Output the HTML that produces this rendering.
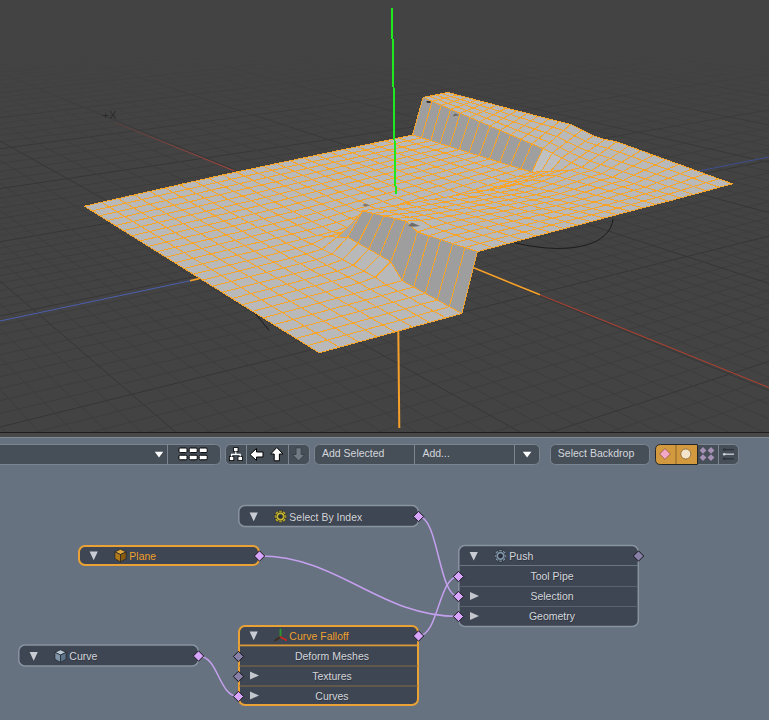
<!DOCTYPE html>
<html><head><meta charset="utf-8">
<style>
html,body{margin:0;padding:0;background:#66727f;}
body{width:769px;height:720px;overflow:hidden;position:relative;font-family:"Liberation Sans",sans-serif;}
#vp{position:absolute;left:0;top:0;width:769px;height:432px;background:#434343;overflow:hidden;}
#vp svg{position:absolute;left:0;top:0;}
</style></head><body>
<div id="vp">
<svg width="769" height="432" viewBox="0 0 769 432" shape-rendering="auto">
<defs><linearGradient id="g1" x1="0" y1="0" x2="0" y2="1"><stop offset="0.12" stop-color="#000"/><stop offset="0.38" stop-color="#fff"/></linearGradient><linearGradient id="g2" x1="0" y1="0" x2="0" y2="1"><stop offset="0.38" stop-color="#000"/><stop offset="0.62" stop-color="#fff"/></linearGradient><mask id="mk1" maskUnits="userSpaceOnUse" x="0" y="0" width="769" height="432"><rect x="0" y="0" width="769" height="432" fill="url(#g1)"/></mask><mask id="mk2" maskUnits="userSpaceOnUse" x="0" y="0" width="769" height="432"><rect x="0" y="0" width="769" height="432" fill="url(#g2)"/></mask></defs>
<g stroke-width="1" opacity="0.8"><g mask="url(#mk1)"><line x1="-5" y1="-13.3" x2="775" y2="-64.3" stroke="#333333"/>
<line x1="-5" y1="-12.1" x2="775" y2="-63.4" stroke="#3c3c3c"/>
<line x1="-5" y1="-10.8" x2="775" y2="-62.6" stroke="#3c3c3c"/>
<line x1="-5" y1="-9.5" x2="775" y2="-61.7" stroke="#3c3c3c"/>
<line x1="-5" y1="-8.1" x2="775" y2="-60.8" stroke="#3c3c3c"/>
<line x1="-5" y1="-6.7" x2="775" y2="-59.8" stroke="#333333"/>
<line x1="-5" y1="-5.3" x2="775" y2="-58.9" stroke="#3c3c3c"/>
<line x1="-5" y1="-3.9" x2="775" y2="-57.9" stroke="#3c3c3c"/>
<line x1="-5" y1="-2.4" x2="775" y2="-56.9" stroke="#3c3c3c"/>
<line x1="-5" y1="-0.9" x2="775" y2="-55.9" stroke="#3c3c3c"/>
<line x1="-5" y1="0.6" x2="775" y2="-54.8" stroke="#333333"/>
<line x1="-5" y1="2.2" x2="775" y2="-53.8" stroke="#3c3c3c"/>
<line x1="-5" y1="3.8" x2="775" y2="-52.7" stroke="#3c3c3c"/>
<line x1="-5" y1="5.5" x2="775" y2="-51.6" stroke="#3c3c3c"/>
<line x1="-5" y1="7.2" x2="775" y2="-50.4" stroke="#3c3c3c"/>
<line x1="-5" y1="8.9" x2="775" y2="-49.2" stroke="#333333"/>
<line x1="-5" y1="10.7" x2="775" y2="-48.0" stroke="#3c3c3c"/>
<line x1="-5" y1="12.5" x2="775" y2="-46.8" stroke="#3c3c3c"/>
<line x1="-5" y1="14.4" x2="775" y2="-45.5" stroke="#3c3c3c"/>
<line x1="-5" y1="16.3" x2="775" y2="-44.2" stroke="#3c3c3c"/>
<line x1="-5" y1="18.3" x2="775" y2="-42.9" stroke="#333333"/>
<line x1="-5" y1="20.3" x2="775" y2="-41.5" stroke="#3c3c3c"/>
<line x1="-5" y1="22.4" x2="775" y2="-40.1" stroke="#3c3c3c"/>
<line x1="-5" y1="24.6" x2="775" y2="-38.7" stroke="#3c3c3c"/>
<line x1="-5" y1="26.8" x2="775" y2="-37.2" stroke="#3c3c3c"/>
<line x1="-5" y1="29.0" x2="775" y2="-35.6" stroke="#333333"/>
<line x1="-5" y1="31.3" x2="775" y2="-34.1" stroke="#3c3c3c"/>
<line x1="-5" y1="33.7" x2="775" y2="-32.4" stroke="#3c3c3c"/>
<line x1="-5" y1="36.2" x2="775" y2="-30.8" stroke="#3c3c3c"/>
<line x1="-5" y1="38.8" x2="775" y2="-29.0" stroke="#3c3c3c"/>
<line x1="-5" y1="41.4" x2="775" y2="-27.3" stroke="#333333"/>
<line x1="-5" y1="44.1" x2="775" y2="-25.4" stroke="#3c3c3c"/>
<line x1="-5" y1="46.9" x2="775" y2="-23.6" stroke="#3c3c3c"/>
<line x1="-5" y1="49.8" x2="775" y2="-21.6" stroke="#3c3c3c"/>
<line x1="-5" y1="52.7" x2="775" y2="-19.6" stroke="#3c3c3c"/>
<line x1="-5" y1="55.8" x2="775" y2="-17.5" stroke="#333333"/>
<line x1="-5" y1="59.0" x2="775" y2="-15.4" stroke="#3c3c3c"/>
<line x1="-5" y1="62.3" x2="775" y2="-13.1" stroke="#3c3c3c"/>
<line x1="-5" y1="65.7" x2="775" y2="-10.8" stroke="#3c3c3c"/>
<line x1="-5" y1="69.2" x2="775" y2="-8.5" stroke="#3c3c3c"/>
<line x1="-5" y1="72.8" x2="775" y2="-6.0" stroke="#333333"/>
<line x1="-5" y1="76.6" x2="775" y2="-3.4" stroke="#3c3c3c"/>
<line x1="-5" y1="80.5" x2="775" y2="-0.8" stroke="#3c3c3c"/>
<line x1="-5" y1="84.6" x2="775" y2="2.0" stroke="#3c3c3c"/>
<line x1="-5" y1="88.9" x2="775" y2="4.9" stroke="#3c3c3c"/>
<line x1="-5" y1="93.3" x2="775" y2="7.8" stroke="#333333"/>
<line x1="-5" y1="97.8" x2="775" y2="10.9" stroke="#3c3c3c"/>
<line x1="-5" y1="102.6" x2="775" y2="14.2" stroke="#3c3c3c"/>
<line x1="-5" y1="107.6" x2="775" y2="17.5" stroke="#3c3c3c"/>
<line x1="-5" y1="112.8" x2="775" y2="21.1" stroke="#3c3c3c"/>
<line x1="-5" y1="118.2" x2="775" y2="24.7" stroke="#333333"/>
<line x1="-5" y1="123.9" x2="775" y2="28.6" stroke="#3c3c3c"/>
<line x1="-5" y1="129.8" x2="775" y2="32.6" stroke="#3c3c3c"/>
<line x1="-5" y1="136.0" x2="775" y2="36.8" stroke="#3c3c3c"/>
<line x1="-5" y1="142.5" x2="775" y2="41.2" stroke="#3c3c3c"/>
<line x1="-5" y1="149.4" x2="775" y2="45.8" stroke="#333333"/>
<line x1="-5" y1="156.5" x2="775" y2="50.7" stroke="#3c3c3c"/>
<line x1="-5" y1="164.1" x2="775" y2="55.8" stroke="#3c3c3c"/>
<line x1="-5" y1="172.1" x2="775" y2="61.2" stroke="#3c3c3c"/>
<line x1="-5" y1="180.5" x2="775" y2="66.9" stroke="#3c3c3c"/>
<line x1="-5" y1="189.4" x2="775" y2="72.9" stroke="#333333"/>
<line x1="-5" y1="198.8" x2="775" y2="79.2" stroke="#3c3c3c"/>
<line x1="-5" y1="208.7" x2="775" y2="86.0" stroke="#3c3c3c"/>
<line x1="-5" y1="219.3" x2="775" y2="93.2" stroke="#3c3c3c"/>
<line x1="-5" y1="230.6" x2="775" y2="100.8" stroke="#3c3c3c"/>
<line x1="-5" y1="242.6" x2="775" y2="108.9" stroke="#333333"/>
<line x1="-5" y1="255.5" x2="775" y2="117.6" stroke="#3c3c3c"/>
<line x1="-5" y1="269.2" x2="775" y2="126.9" stroke="#3c3c3c"/>
<line x1="-5" y1="284.0" x2="775" y2="136.9" stroke="#3c3c3c"/>
<line x1="-5" y1="299.9" x2="775" y2="147.7" stroke="#3c3c3c"/>
<line x1="-5" y1="317.0" x2="775" y2="159.3" stroke="#333333"/>
<line x1="-5" y1="335.6" x2="775" y2="171.8" stroke="#3c3c3c"/>
<line x1="-5" y1="355.8" x2="775" y2="185.5" stroke="#3c3c3c"/>
<line x1="-5" y1="377.8" x2="775" y2="200.4" stroke="#3c3c3c"/>
<line x1="-5" y1="401.8" x2="775" y2="216.7" stroke="#3c3c3c"/>
<line x1="-5" y1="428.3" x2="775" y2="234.6" stroke="#333333"/>
<line x1="-5" y1="457.5" x2="775" y2="254.3" stroke="#3c3c3c"/>
<line x1="-5" y1="489.9" x2="775" y2="276.3" stroke="#3c3c3c"/>
<line x1="-5" y1="526.1" x2="775" y2="300.8" stroke="#3c3c3c"/>
<line x1="-5" y1="566.8" x2="775" y2="328.3" stroke="#3c3c3c"/>
<line x1="-5" y1="612.8" x2="775" y2="359.4" stroke="#333333"/>
<line x1="-5" y1="665.3" x2="775" y2="394.9" stroke="#3c3c3c"/>
<line x1="-5" y1="-77.3" x2="775" y2="-5.0" stroke="#333333"/>
<line x1="-5" y1="-76.7" x2="775" y2="-3.3" stroke="#3c3c3c"/>
<line x1="-5" y1="-76.0" x2="775" y2="-1.7" stroke="#3c3c3c"/>
<line x1="-5" y1="-75.4" x2="775" y2="0.1" stroke="#3c3c3c"/>
<line x1="-5" y1="-74.7" x2="775" y2="1.9" stroke="#3c3c3c"/>
<line x1="-5" y1="-74.1" x2="775" y2="3.7" stroke="#333333"/>
<line x1="-5" y1="-73.4" x2="775" y2="5.6" stroke="#3c3c3c"/>
<line x1="-5" y1="-72.6" x2="775" y2="7.5" stroke="#3c3c3c"/>
<line x1="-5" y1="-71.9" x2="775" y2="9.5" stroke="#3c3c3c"/>
<line x1="-5" y1="-71.1" x2="775" y2="11.5" stroke="#3c3c3c"/>
<line x1="-5" y1="-70.4" x2="775" y2="13.6" stroke="#333333"/>
<line x1="-5" y1="-69.6" x2="775" y2="15.8" stroke="#3c3c3c"/>
<line x1="-5" y1="-68.7" x2="775" y2="18.0" stroke="#3c3c3c"/>
<line x1="-5" y1="-67.9" x2="775" y2="20.3" stroke="#3c3c3c"/>
<line x1="-5" y1="-67.0" x2="775" y2="22.7" stroke="#3c3c3c"/>
<line x1="-5" y1="-66.1" x2="775" y2="25.1" stroke="#333333"/>
<line x1="-5" y1="-65.2" x2="775" y2="27.6" stroke="#3c3c3c"/>
<line x1="-5" y1="-64.2" x2="775" y2="30.2" stroke="#3c3c3c"/>
<line x1="-5" y1="-63.2" x2="775" y2="32.9" stroke="#3c3c3c"/>
<line x1="-5" y1="-62.2" x2="775" y2="35.6" stroke="#3c3c3c"/>
<line x1="-5" y1="-61.1" x2="775" y2="38.5" stroke="#333333"/>
<line x1="-5" y1="-60.0" x2="775" y2="41.5" stroke="#3c3c3c"/>
<line x1="-5" y1="-58.9" x2="775" y2="44.5" stroke="#3c3c3c"/>
<line x1="-5" y1="-57.7" x2="775" y2="47.7" stroke="#3c3c3c"/>
<line x1="-5" y1="-56.5" x2="775" y2="51.0" stroke="#3c3c3c"/>
<line x1="-5" y1="-55.2" x2="775" y2="54.4" stroke="#333333"/>
<line x1="-5" y1="-53.9" x2="775" y2="57.9" stroke="#3c3c3c"/>
<line x1="-5" y1="-52.6" x2="775" y2="61.6" stroke="#3c3c3c"/>
<line x1="-5" y1="-51.1" x2="775" y2="65.4" stroke="#3c3c3c"/>
<line x1="-5" y1="-49.7" x2="775" y2="69.3" stroke="#3c3c3c"/>
<line x1="-5" y1="-48.1" x2="775" y2="73.4" stroke="#333333"/>
<line x1="-5" y1="-46.6" x2="775" y2="77.7" stroke="#3c3c3c"/>
<line x1="-5" y1="-44.9" x2="775" y2="82.2" stroke="#3c3c3c"/>
<line x1="-5" y1="-43.2" x2="775" y2="86.8" stroke="#3c3c3c"/>
<line x1="-5" y1="-41.4" x2="775" y2="91.7" stroke="#3c3c3c"/>
<line x1="-5" y1="-39.5" x2="775" y2="96.8" stroke="#333333"/>
<line x1="-5" y1="-37.5" x2="775" y2="102.1" stroke="#3c3c3c"/>
<line x1="-5" y1="-35.4" x2="775" y2="107.7" stroke="#3c3c3c"/>
<line x1="-5" y1="-33.3" x2="775" y2="113.5" stroke="#3c3c3c"/>
<line x1="-5" y1="-31.0" x2="775" y2="119.6" stroke="#3c3c3c"/>
<line x1="-5" y1="-28.6" x2="775" y2="126.0" stroke="#333333"/>
<line x1="-5" y1="-26.1" x2="775" y2="132.8" stroke="#3c3c3c"/>
<line x1="-5" y1="-23.4" x2="775" y2="139.9" stroke="#3c3c3c"/>
<line x1="-5" y1="-20.7" x2="775" y2="147.4" stroke="#3c3c3c"/>
<line x1="-5" y1="-17.7" x2="775" y2="155.4" stroke="#3c3c3c"/>
<line x1="-5" y1="-14.6" x2="775" y2="163.8" stroke="#333333"/>
<line x1="-5" y1="-11.3" x2="775" y2="172.7" stroke="#3c3c3c"/>
<line x1="-5" y1="-7.8" x2="775" y2="182.1" stroke="#3c3c3c"/>
<line x1="-5" y1="-4.0" x2="775" y2="192.2" stroke="#3c3c3c"/>
<line x1="-5" y1="-0.1" x2="775" y2="202.9" stroke="#3c3c3c"/>
<line x1="-5" y1="4.2" x2="775" y2="214.3" stroke="#333333"/>
<line x1="-5" y1="8.7" x2="775" y2="226.5" stroke="#3c3c3c"/>
<line x1="-5" y1="13.6" x2="775" y2="239.7" stroke="#3c3c3c"/>
<line x1="-5" y1="18.8" x2="775" y2="253.8" stroke="#3c3c3c"/>
<line x1="-5" y1="24.5" x2="775" y2="269.0" stroke="#3c3c3c"/>
<line x1="-5" y1="30.6" x2="775" y2="285.4" stroke="#333333"/>
<line x1="-5" y1="37.2" x2="775" y2="303.3" stroke="#3c3c3c"/>
<line x1="-5" y1="44.5" x2="775" y2="322.8" stroke="#3c3c3c"/>
<line x1="-5" y1="52.4" x2="775" y2="344.0" stroke="#3c3c3c"/>
<line x1="-5" y1="61.0" x2="775" y2="367.3" stroke="#3c3c3c"/>
<line x1="-5" y1="70.6" x2="775" y2="393.1" stroke="#333333"/>
<line x1="-5" y1="81.2" x2="775" y2="421.6" stroke="#3c3c3c"/>
<line x1="-5" y1="93.0" x2="775" y2="453.3" stroke="#3c3c3c"/>
<line x1="-5" y1="106.2" x2="775" y2="488.9" stroke="#3c3c3c"/>
<line x1="-5" y1="121.1" x2="775" y2="529.1" stroke="#3c3c3c"/>
<line x1="-5" y1="138.1" x2="775" y2="574.9" stroke="#333333"/>
<line x1="-5" y1="157.6" x2="775" y2="627.4" stroke="#3c3c3c"/>
<line x1="-5" y1="180.3" x2="775" y2="688.3" stroke="#3c3c3c"/>
<line x1="-5" y1="206.8" x2="775" y2="759.8" stroke="#3c3c3c"/>
<line x1="-5" y1="238.4" x2="775" y2="844.9" stroke="#3c3c3c"/>
<line x1="-5" y1="276.7" x2="775" y2="947.9" stroke="#333333"/>
<line x1="-5" y1="323.9" x2="775" y2="1075.1" stroke="#3c3c3c"/>
<line x1="-5" y1="383.8" x2="775" y2="1236.2" stroke="#3c3c3c"/>
<line x1="-5" y1="462.0" x2="775" y2="1446.8" stroke="#3c3c3c"/>
<line x1="-5" y1="568.7" x2="775" y2="1734.0" stroke="#3c3c3c"/>
<line x1="-5" y1="722.7" x2="775" y2="2148.5" stroke="#333333"/>
<line x1="-5" y1="964.5" x2="775" y2="2799.4" stroke="#3c3c3c"/>
<line x1="-5" y1="1399.2" x2="775" y2="3969.6" stroke="#3c3c3c"/></g><g mask="url(#mk2)"><line x1="-5" y1="-12.7" x2="775" y2="-63.9" stroke="#3c3c3c"/>
<line x1="-5" y1="-11.4" x2="775" y2="-63.0" stroke="#3c3c3c"/>
<line x1="-5" y1="-10.1" x2="775" y2="-62.1" stroke="#3c3c3c"/>
<line x1="-5" y1="-8.8" x2="775" y2="-61.2" stroke="#3c3c3c"/>
<line x1="-5" y1="-7.4" x2="775" y2="-60.3" stroke="#3c3c3c"/>
<line x1="-5" y1="-6.0" x2="775" y2="-59.4" stroke="#3c3c3c"/>
<line x1="-5" y1="-4.6" x2="775" y2="-58.4" stroke="#3c3c3c"/>
<line x1="-5" y1="-3.2" x2="775" y2="-57.4" stroke="#3c3c3c"/>
<line x1="-5" y1="-1.7" x2="775" y2="-56.4" stroke="#3c3c3c"/>
<line x1="-5" y1="-0.1" x2="775" y2="-55.4" stroke="#3c3c3c"/>
<line x1="-5" y1="1.4" x2="775" y2="-54.3" stroke="#3c3c3c"/>
<line x1="-5" y1="3.0" x2="775" y2="-53.2" stroke="#3c3c3c"/>
<line x1="-5" y1="4.6" x2="775" y2="-52.1" stroke="#3c3c3c"/>
<line x1="-5" y1="6.3" x2="775" y2="-51.0" stroke="#3c3c3c"/>
<line x1="-5" y1="8.0" x2="775" y2="-49.8" stroke="#3c3c3c"/>
<line x1="-5" y1="9.8" x2="775" y2="-48.6" stroke="#3c3c3c"/>
<line x1="-5" y1="11.6" x2="775" y2="-47.4" stroke="#3c3c3c"/>
<line x1="-5" y1="13.5" x2="775" y2="-46.2" stroke="#3c3c3c"/>
<line x1="-5" y1="15.4" x2="775" y2="-44.9" stroke="#3c3c3c"/>
<line x1="-5" y1="17.3" x2="775" y2="-43.6" stroke="#3c3c3c"/>
<line x1="-5" y1="19.3" x2="775" y2="-42.2" stroke="#3c3c3c"/>
<line x1="-5" y1="21.4" x2="775" y2="-40.8" stroke="#3c3c3c"/>
<line x1="-5" y1="23.5" x2="775" y2="-39.4" stroke="#3c3c3c"/>
<line x1="-5" y1="25.6" x2="775" y2="-37.9" stroke="#3c3c3c"/>
<line x1="-5" y1="27.9" x2="775" y2="-36.4" stroke="#3c3c3c"/>
<line x1="-5" y1="30.2" x2="775" y2="-34.9" stroke="#3c3c3c"/>
<line x1="-5" y1="32.5" x2="775" y2="-33.3" stroke="#3c3c3c"/>
<line x1="-5" y1="35.0" x2="775" y2="-31.6" stroke="#3c3c3c"/>
<line x1="-5" y1="37.5" x2="775" y2="-29.9" stroke="#3c3c3c"/>
<line x1="-5" y1="40.1" x2="775" y2="-28.2" stroke="#3c3c3c"/>
<line x1="-5" y1="42.7" x2="775" y2="-26.4" stroke="#3c3c3c"/>
<line x1="-5" y1="45.5" x2="775" y2="-24.5" stroke="#3c3c3c"/>
<line x1="-5" y1="48.3" x2="775" y2="-22.6" stroke="#3c3c3c"/>
<line x1="-5" y1="51.2" x2="775" y2="-20.6" stroke="#3c3c3c"/>
<line x1="-5" y1="54.3" x2="775" y2="-18.6" stroke="#3c3c3c"/>
<line x1="-5" y1="57.4" x2="775" y2="-16.4" stroke="#3c3c3c"/>
<line x1="-5" y1="60.6" x2="775" y2="-14.3" stroke="#3c3c3c"/>
<line x1="-5" y1="64.0" x2="775" y2="-12.0" stroke="#3c3c3c"/>
<line x1="-5" y1="67.4" x2="775" y2="-9.7" stroke="#3c3c3c"/>
<line x1="-5" y1="71.0" x2="775" y2="-7.2" stroke="#3c3c3c"/>
<line x1="-5" y1="74.7" x2="775" y2="-4.7" stroke="#3c3c3c"/>
<line x1="-5" y1="78.6" x2="775" y2="-2.1" stroke="#3c3c3c"/>
<line x1="-5" y1="82.6" x2="775" y2="0.6" stroke="#3c3c3c"/>
<line x1="-5" y1="86.7" x2="775" y2="3.4" stroke="#3c3c3c"/>
<line x1="-5" y1="91.0" x2="775" y2="6.3" stroke="#3c3c3c"/>
<line x1="-5" y1="95.5" x2="775" y2="9.4" stroke="#3c3c3c"/>
<line x1="-5" y1="100.2" x2="775" y2="12.5" stroke="#3c3c3c"/>
<line x1="-5" y1="105.1" x2="775" y2="15.8" stroke="#3c3c3c"/>
<line x1="-5" y1="110.2" x2="775" y2="19.3" stroke="#3c3c3c"/>
<line x1="-5" y1="115.5" x2="775" y2="22.9" stroke="#3c3c3c"/>
<line x1="-5" y1="121.0" x2="775" y2="26.6" stroke="#3c3c3c"/>
<line x1="-5" y1="126.8" x2="775" y2="30.5" stroke="#3c3c3c"/>
<line x1="-5" y1="132.9" x2="775" y2="34.6" stroke="#3c3c3c"/>
<line x1="-5" y1="139.2" x2="775" y2="39.0" stroke="#3c3c3c"/>
<line x1="-5" y1="145.9" x2="775" y2="43.5" stroke="#3c3c3c"/>
<line x1="-5" y1="152.9" x2="775" y2="48.2" stroke="#3c3c3c"/>
<line x1="-5" y1="160.3" x2="775" y2="53.2" stroke="#3c3c3c"/>
<line x1="-5" y1="168.0" x2="775" y2="58.4" stroke="#3c3c3c"/>
<line x1="-5" y1="176.2" x2="775" y2="64.0" stroke="#3c3c3c"/>
<line x1="-5" y1="184.9" x2="775" y2="69.8" stroke="#3c3c3c"/>
<line x1="-5" y1="194.0" x2="775" y2="76.0" stroke="#3c3c3c"/>
<line x1="-5" y1="203.7" x2="775" y2="82.6" stroke="#3c3c3c"/>
<line x1="-5" y1="214.0" x2="775" y2="89.5" stroke="#3c3c3c"/>
<line x1="-5" y1="224.9" x2="775" y2="96.9" stroke="#3c3c3c"/>
<line x1="-5" y1="236.5" x2="775" y2="104.8" stroke="#3c3c3c"/>
<line x1="-5" y1="248.9" x2="775" y2="113.2" stroke="#3c3c3c"/>
<line x1="-5" y1="262.2" x2="775" y2="122.2" stroke="#3c3c3c"/>
<line x1="-5" y1="276.5" x2="775" y2="131.8" stroke="#3c3c3c"/>
<line x1="-5" y1="291.8" x2="775" y2="142.2" stroke="#3c3c3c"/>
<line x1="-5" y1="308.3" x2="775" y2="153.4" stroke="#3c3c3c"/>
<line x1="-5" y1="326.1" x2="775" y2="165.4" stroke="#3c3c3c"/>
<line x1="-5" y1="345.5" x2="775" y2="178.5" stroke="#3c3c3c"/>
<line x1="-5" y1="366.5" x2="775" y2="192.8" stroke="#3c3c3c"/>
<line x1="-5" y1="389.5" x2="775" y2="208.3" stroke="#3c3c3c"/>
<line x1="-5" y1="414.7" x2="775" y2="225.4" stroke="#3c3c3c"/>
<line x1="-5" y1="442.5" x2="775" y2="244.2" stroke="#3c3c3c"/>
<line x1="-5" y1="473.3" x2="775" y2="265.0" stroke="#3c3c3c"/>
<line x1="-5" y1="507.5" x2="775" y2="288.2" stroke="#3c3c3c"/>
<line x1="-5" y1="545.8" x2="775" y2="314.1" stroke="#3c3c3c"/>
<line x1="-5" y1="589.0" x2="775" y2="343.4" stroke="#3c3c3c"/>
<line x1="-5" y1="638.1" x2="775" y2="376.6" stroke="#3c3c3c"/>
<line x1="-5" y1="-77.0" x2="775" y2="-4.2" stroke="#3c3c3c"/>
<line x1="-5" y1="-76.4" x2="775" y2="-2.5" stroke="#3c3c3c"/>
<line x1="-5" y1="-75.7" x2="775" y2="-0.8" stroke="#3c3c3c"/>
<line x1="-5" y1="-75.1" x2="775" y2="1.0" stroke="#3c3c3c"/>
<line x1="-5" y1="-74.4" x2="775" y2="2.8" stroke="#3c3c3c"/>
<line x1="-5" y1="-73.7" x2="775" y2="4.6" stroke="#3c3c3c"/>
<line x1="-5" y1="-73.0" x2="775" y2="6.5" stroke="#3c3c3c"/>
<line x1="-5" y1="-72.3" x2="775" y2="8.5" stroke="#3c3c3c"/>
<line x1="-5" y1="-71.5" x2="775" y2="10.5" stroke="#3c3c3c"/>
<line x1="-5" y1="-70.8" x2="775" y2="12.6" stroke="#3c3c3c"/>
<line x1="-5" y1="-70.0" x2="775" y2="14.7" stroke="#3c3c3c"/>
<line x1="-5" y1="-69.1" x2="775" y2="16.9" stroke="#3c3c3c"/>
<line x1="-5" y1="-68.3" x2="775" y2="19.2" stroke="#3c3c3c"/>
<line x1="-5" y1="-67.4" x2="775" y2="21.5" stroke="#3c3c3c"/>
<line x1="-5" y1="-66.6" x2="775" y2="23.9" stroke="#3c3c3c"/>
<line x1="-5" y1="-65.6" x2="775" y2="26.3" stroke="#3c3c3c"/>
<line x1="-5" y1="-64.7" x2="775" y2="28.9" stroke="#3c3c3c"/>
<line x1="-5" y1="-63.7" x2="775" y2="31.5" stroke="#3c3c3c"/>
<line x1="-5" y1="-62.7" x2="775" y2="34.3" stroke="#3c3c3c"/>
<line x1="-5" y1="-61.7" x2="775" y2="37.1" stroke="#3c3c3c"/>
<line x1="-5" y1="-60.6" x2="775" y2="40.0" stroke="#3c3c3c"/>
<line x1="-5" y1="-59.5" x2="775" y2="43.0" stroke="#3c3c3c"/>
<line x1="-5" y1="-58.3" x2="775" y2="46.1" stroke="#3c3c3c"/>
<line x1="-5" y1="-57.1" x2="775" y2="49.3" stroke="#3c3c3c"/>
<line x1="-5" y1="-55.9" x2="775" y2="52.6" stroke="#3c3c3c"/>
<line x1="-5" y1="-54.6" x2="775" y2="56.1" stroke="#3c3c3c"/>
<line x1="-5" y1="-53.2" x2="775" y2="59.7" stroke="#3c3c3c"/>
<line x1="-5" y1="-51.9" x2="775" y2="63.4" stroke="#3c3c3c"/>
<line x1="-5" y1="-50.4" x2="775" y2="67.3" stroke="#3c3c3c"/>
<line x1="-5" y1="-48.9" x2="775" y2="71.4" stroke="#3c3c3c"/>
<line x1="-5" y1="-47.4" x2="775" y2="75.6" stroke="#3c3c3c"/>
<line x1="-5" y1="-45.7" x2="775" y2="79.9" stroke="#3c3c3c"/>
<line x1="-5" y1="-44.0" x2="775" y2="84.5" stroke="#3c3c3c"/>
<line x1="-5" y1="-42.3" x2="775" y2="89.2" stroke="#3c3c3c"/>
<line x1="-5" y1="-40.4" x2="775" y2="94.2" stroke="#3c3c3c"/>
<line x1="-5" y1="-38.5" x2="775" y2="99.4" stroke="#3c3c3c"/>
<line x1="-5" y1="-36.5" x2="775" y2="104.8" stroke="#3c3c3c"/>
<line x1="-5" y1="-34.4" x2="775" y2="110.5" stroke="#3c3c3c"/>
<line x1="-5" y1="-32.1" x2="775" y2="116.5" stroke="#3c3c3c"/>
<line x1="-5" y1="-29.8" x2="775" y2="122.8" stroke="#3c3c3c"/>
<line x1="-5" y1="-27.4" x2="775" y2="129.4" stroke="#3c3c3c"/>
<line x1="-5" y1="-24.8" x2="775" y2="136.3" stroke="#3c3c3c"/>
<line x1="-5" y1="-22.1" x2="775" y2="143.6" stroke="#3c3c3c"/>
<line x1="-5" y1="-19.2" x2="775" y2="151.4" stroke="#3c3c3c"/>
<line x1="-5" y1="-16.2" x2="775" y2="159.5" stroke="#3c3c3c"/>
<line x1="-5" y1="-13.0" x2="775" y2="168.2" stroke="#3c3c3c"/>
<line x1="-5" y1="-9.6" x2="775" y2="177.3" stroke="#3c3c3c"/>
<line x1="-5" y1="-5.9" x2="775" y2="187.1" stroke="#3c3c3c"/>
<line x1="-5" y1="-2.1" x2="775" y2="197.4" stroke="#3c3c3c"/>
<line x1="-5" y1="2.0" x2="775" y2="208.5" stroke="#3c3c3c"/>
<line x1="-5" y1="6.4" x2="775" y2="220.3" stroke="#3c3c3c"/>
<line x1="-5" y1="11.1" x2="775" y2="233.0" stroke="#3c3c3c"/>
<line x1="-5" y1="16.2" x2="775" y2="246.6" stroke="#3c3c3c"/>
<line x1="-5" y1="21.6" x2="775" y2="261.2" stroke="#3c3c3c"/>
<line x1="-5" y1="27.5" x2="775" y2="277.1" stroke="#3c3c3c"/>
<line x1="-5" y1="33.9" x2="775" y2="294.2" stroke="#3c3c3c"/>
<line x1="-5" y1="40.8" x2="775" y2="312.8" stroke="#3c3c3c"/>
<line x1="-5" y1="48.3" x2="775" y2="333.1" stroke="#3c3c3c"/>
<line x1="-5" y1="56.6" x2="775" y2="355.4" stroke="#3c3c3c"/>
<line x1="-5" y1="65.7" x2="775" y2="379.9" stroke="#3c3c3c"/>
<line x1="-5" y1="75.7" x2="775" y2="406.9" stroke="#3c3c3c"/>
<line x1="-5" y1="86.9" x2="775" y2="437.0" stroke="#3c3c3c"/>
<line x1="-5" y1="99.4" x2="775" y2="470.6" stroke="#3c3c3c"/>
<line x1="-5" y1="113.4" x2="775" y2="508.4" stroke="#3c3c3c"/>
<line x1="-5" y1="129.3" x2="775" y2="551.2" stroke="#3c3c3c"/>
<line x1="-5" y1="147.5" x2="775" y2="600.2" stroke="#3c3c3c"/>
<line x1="-5" y1="168.5" x2="775" y2="656.6" stroke="#3c3c3c"/>
<line x1="-5" y1="193.0" x2="775" y2="722.5" stroke="#3c3c3c"/>
<line x1="-5" y1="221.9" x2="775" y2="800.4" stroke="#3c3c3c"/>
<line x1="-5" y1="256.6" x2="775" y2="893.8" stroke="#3c3c3c"/>
<line x1="-5" y1="299.0" x2="775" y2="1008.0" stroke="#3c3c3c"/>
<line x1="-5" y1="352.0" x2="775" y2="1150.6" stroke="#3c3c3c"/>
<line x1="-5" y1="420.1" x2="775" y2="1334.0" stroke="#3c3c3c"/>
<line x1="-5" y1="510.9" x2="775" y2="1578.4" stroke="#3c3c3c"/>
<line x1="-5" y1="638.0" x2="775" y2="1920.5" stroke="#3c3c3c"/>
<line x1="-5" y1="828.5" x2="775" y2="2433.4" stroke="#3c3c3c"/>
<line x1="-5" y1="1145.7" x2="775" y2="3287.2" stroke="#3c3c3c"/>
<line x1="-5" y1="1779.0" x2="775" y2="4992.0" stroke="#3c3c3c"/></g></g>
<defs><linearGradient id="fade" x1="0" y1="0" x2="0" y2="1"><stop offset="0" stop-color="#434343" stop-opacity="1"/><stop offset="0.3" stop-color="#434343" stop-opacity="1"/><stop offset="1" stop-color="#434343" stop-opacity="0"/></linearGradient></defs>
<!-- axes -->
<linearGradient id="rg" gradientUnits="userSpaceOnUse" x1="114.9" y1="122.4" x2="234.5" y2="170.9"><stop offset="0" stop-color="#55403d"/><stop offset="1" stop-color="#b0443a"/></linearGradient>
<line x1="114.9" y1="122.4" x2="234.5" y2="170.9" stroke="url(#rg)" stroke-width="1"/>
<line x1="540" y1="294.8" x2="769" y2="387.6" stroke="#b4402e" stroke-width="1"/>
<line x1="473" y1="267.6" x2="540" y2="294.8" stroke="#f5a02a" stroke-width="1.6"/>
<line x1="0" y1="321" x2="190" y2="280.8" stroke="#4a5fb0" stroke-width="1"/>
<line x1="190" y1="280.8" x2="199" y2="278.6" stroke="#f5a02a" stroke-width="1.6"/>
<line x1="697.8" y1="171.2" x2="769" y2="157" stroke="#3f4e8e" stroke-width="1"/>
<!-- curve arcs -->
<path d="M244.3 297.1 Q255 315 269.2 330.5" fill="none" stroke="#1c1c1c" stroke-width="1"/>
<path d="M613 219 C612 232 600 241 587.5 244.7 C570 250 545 250 514.6 242.8" fill="none" stroke="#1c1c1c" stroke-width="1"/>
<g stroke="#f7a428" stroke-width="1" stroke-linejoin="round" shape-rendering="crispEdges">
<polygon points="441.7,93.7 448.0,92.5 457.4,95.0 451.0,96.6" fill="rgb(185,185,185)"/>
<polygon points="435.5,94.9 441.7,93.7 451.0,96.6 444.7,98.1" fill="rgb(185,185,185)"/>
<polygon points="451.0,96.6 457.4,95.0 466.9,97.5 460.5,99.4" fill="rgb(185,185,185)"/>
<polygon points="429.3,96.1 435.5,94.9 444.7,98.1 438.4,99.7" fill="rgb(185,185,185)"/>
<polygon points="444.7,98.1 451.0,96.6 460.5,99.4 454.1,101.3" fill="rgb(185,185,185)"/>
<polygon points="460.5,99.4 466.9,97.5 476.6,100.1 470.1,102.3" fill="rgb(185,185,185)"/>
<polygon points="423.1,97.3 429.3,96.1 438.4,99.7 432.1,101.2" fill="rgb(185,185,185)"/>
<polygon points="438.4,99.7 444.7,98.1 454.1,101.3 447.7,103.3" fill="rgb(185,185,185)"/>
<polygon points="454.1,101.3 460.5,99.4 470.1,102.3 463.6,104.6" fill="rgb(185,185,185)"/>
<polygon points="412.6,135.0 423.1,97.3 432.1,101.2 421.6,137.8" fill="rgb(158,158,158)"/>
<polygon points="470.1,102.3 476.6,100.1 486.4,102.6 479.8,105.3" fill="rgb(185,185,185)"/>
<polygon points="432.1,101.2 438.4,99.7 447.7,103.3 441.3,105.2" fill="rgb(185,185,185)"/>
<polygon points="447.7,103.3 454.1,101.3 463.6,104.6 457.2,106.9" fill="rgb(185,185,185)"/>
<polygon points="463.6,104.6 470.1,102.3 479.8,105.3 473.3,108.0" fill="rgb(185,185,185)"/>
<polygon points="421.6,137.8 432.1,101.2 441.3,105.2 430.8,140.6" fill="rgb(158,158,158)"/>
<polygon points="479.8,105.3 486.4,102.6 496.4,105.3 489.7,108.3" fill="rgb(185,185,185)"/>
<polygon points="441.3,105.2 447.7,103.3 457.2,106.9 450.7,109.2" fill="rgb(185,185,185)"/>
<polygon points="398.5,137.9 412.6,135.0 421.6,137.8 407.4,140.9" fill="rgb(185,185,185)"/>
<polygon points="457.2,106.9 463.6,104.6 473.3,108.0 466.8,110.6" fill="rgb(185,185,185)"/>
<polygon points="473.3,108.0 479.8,105.3 489.7,108.3 483.1,111.4" fill="rgb(185,185,185)"/>
<polygon points="430.8,140.6 441.3,105.2 450.7,109.2 440.1,143.6" fill="rgb(158,158,158)"/>
<polygon points="489.7,108.3 496.4,105.3 506.5,108.0 499.8,111.4" fill="rgb(185,185,185)"/>
<polygon points="450.7,109.2 457.2,106.9 466.8,110.6 460.3,113.3" fill="rgb(185,185,185)"/>
<polygon points="407.4,140.9 421.6,137.8 430.8,140.6 416.6,143.8" fill="rgb(185,185,185)"/>
<polygon points="466.8,110.6 473.3,108.0 483.1,111.4 476.6,114.4" fill="rgb(185,185,185)"/>
<polygon points="483.1,111.4 489.7,108.3 499.8,111.4 493.1,114.8" fill="rgb(185,185,185)"/>
<polygon points="440.1,143.6 450.7,109.2 460.3,113.3 449.6,146.6" fill="rgb(158,158,158)"/>
<polygon points="384.5,140.9 398.5,137.9 407.4,140.9 393.4,143.9" fill="rgb(185,185,185)"/>
<polygon points="499.8,111.4 506.5,108.0 516.8,110.7 510.0,114.5" fill="rgb(185,185,185)"/>
<polygon points="460.3,113.3 466.8,110.6 476.6,114.4 470.0,117.4" fill="rgb(185,185,185)"/>
<polygon points="416.6,143.8 430.8,140.6 440.1,143.6 425.8,146.9" fill="rgb(185,185,185)"/>
<polygon points="476.6,114.4 483.1,111.4 493.1,114.8 486.5,118.2" fill="rgb(185,185,185)"/>
<polygon points="493.1,114.8 499.8,111.4 510.0,114.5 503.3,118.3" fill="rgb(185,185,185)"/>
<polygon points="449.6,146.6 460.3,113.3 470.0,117.4 459.3,149.6" fill="rgb(158,158,158)"/>
<polygon points="393.4,143.9 407.4,140.9 416.6,143.8 402.5,147.0" fill="rgb(185,185,185)"/>
<polygon points="510.0,114.5 516.8,110.7 527.2,113.4 520.4,117.7" fill="rgb(185,185,185)"/>
<polygon points="470.0,117.4 476.6,114.4 486.5,118.2 479.9,121.7" fill="rgb(185,185,185)"/>
<polygon points="370.8,143.8 384.5,140.9 393.4,143.9 379.6,146.9" fill="rgb(185,185,185)"/>
<polygon points="425.8,146.9 440.1,143.6 449.6,146.6 435.3,150.0" fill="rgb(185,185,185)"/>
<polygon points="486.5,118.2 493.1,114.8 503.3,118.3 496.6,122.1" fill="rgb(185,185,185)"/>
<polygon points="503.3,118.3 510.0,114.5 520.4,117.7 513.6,121.9" fill="rgb(185,185,185)"/>
<polygon points="459.3,149.6 470.0,117.4 479.9,121.7 469.1,152.7" fill="rgb(158,158,158)"/>
<polygon points="402.5,147.0 416.6,143.8 425.8,146.9 411.8,150.1" fill="rgb(185,185,185)"/>
<polygon points="520.4,117.7 527.2,113.4 537.8,116.2 530.9,120.9" fill="rgb(185,185,185)"/>
<polygon points="479.9,121.7 486.5,118.2 496.6,122.1 490.0,126.0" fill="rgb(185,185,185)"/>
<polygon points="379.6,146.9 393.4,143.9 402.5,147.0 388.7,150.1" fill="rgb(185,185,185)"/>
<polygon points="435.3,150.0 449.6,146.6 459.3,149.6 444.9,153.1" fill="rgb(185,185,185)"/>
<polygon points="496.6,122.1 503.3,118.3 513.6,121.9 506.9,126.1" fill="rgb(185,185,185)"/>
<polygon points="357.1,146.7 370.8,143.8 379.6,146.9 366.0,149.9" fill="rgb(185,185,185)"/>
<polygon points="513.6,121.9 520.4,117.7 530.9,120.9 524.1,125.5" fill="rgb(185,185,185)"/>
<polygon points="411.8,150.1 425.8,146.9 435.3,150.0 421.2,153.3" fill="rgb(185,185,185)"/>
<polygon points="469.1,152.7 479.9,121.7 490.0,126.0 479.2,155.8" fill="rgb(158,158,158)"/>
<polygon points="530.9,120.9 537.8,116.2 548.5,118.9 541.7,124.0" fill="rgb(185,185,185)"/>
<polygon points="490.0,126.0 496.6,122.1 506.9,126.1 500.2,130.3" fill="rgb(185,185,185)"/>
<polygon points="388.7,150.1 402.5,147.0 411.8,150.1 397.9,153.4" fill="rgb(185,185,185)"/>
<polygon points="444.9,153.1 459.3,149.6 469.1,152.7 454.7,156.3" fill="rgb(185,185,185)"/>
<polygon points="506.9,126.1 513.6,121.9 524.1,125.5 517.4,130.2" fill="rgb(185,185,185)"/>
<polygon points="366.0,149.9 379.6,146.9 388.7,150.1 375.0,153.2" fill="rgb(185,185,185)"/>
<polygon points="524.1,125.5 530.9,120.9 541.7,124.0 534.8,129.1" fill="rgb(185,185,185)"/>
<polygon points="421.2,153.3 435.3,150.0 444.9,153.1 430.8,156.6" fill="rgb(185,185,185)"/>
<polygon points="479.2,155.8 490.0,126.0 500.2,130.3 489.4,159.0" fill="rgb(158,158,158)"/>
<polygon points="541.7,124.0 548.5,118.9 559.4,121.5 552.5,127.1" fill="rgb(185,185,185)"/>
<polygon points="343.7,149.5 357.1,146.7 366.0,149.9 352.5,152.8" fill="rgb(185,185,185)"/>
<polygon points="500.2,130.3 506.9,126.1 517.4,130.2 510.6,134.8" fill="rgb(185,185,185)"/>
<polygon points="397.9,153.4 411.8,150.1 421.2,153.3 407.3,156.7" fill="rgb(185,185,185)"/>
<polygon points="454.7,156.3 469.1,152.7 479.2,155.8 464.7,159.6" fill="rgb(185,185,185)"/>
<polygon points="517.4,130.2 524.1,125.5 534.8,129.1 528.0,134.2" fill="rgb(185,185,185)"/>
<polygon points="375.0,153.2 388.7,150.1 397.9,153.4 384.2,156.6" fill="rgb(185,185,185)"/>
<polygon points="534.8,129.1 541.7,124.0 552.5,127.1 545.7,132.7" fill="rgb(185,185,185)"/>
<polygon points="430.8,156.6 444.9,153.1 454.7,156.3 440.5,159.9" fill="rgb(185,185,185)"/>
<polygon points="489.4,159.0 500.2,130.3 510.6,134.8 499.7,162.3" fill="rgb(158,158,158)"/>
<polygon points="352.5,152.8 366.0,149.9 375.0,153.2 361.4,156.2" fill="rgb(185,185,185)"/>
<polygon points="552.5,127.1 559.4,121.5 570.5,124.4 563.6,130.4" fill="rgb(185,185,185)"/>
<polygon points="510.6,134.8 517.4,130.2 528.0,134.2 521.2,139.3" fill="rgb(185,185,185)"/>
<polygon points="407.3,156.7 421.2,153.3 430.8,156.6 416.8,160.1" fill="rgb(185,185,185)"/>
<polygon points="464.7,159.6 479.2,155.8 489.4,159.0 474.8,162.9" fill="rgb(185,185,185)"/>
<polygon points="330.3,152.3 343.7,149.5 352.5,152.8 339.0,155.8" fill="rgb(185,185,185)"/>
<polygon points="528.0,134.2 534.8,129.1 545.7,132.7 538.8,138.3" fill="rgb(185,185,185)"/>
<polygon points="384.2,156.6 397.9,153.4 407.3,156.7 393.5,160.0" fill="rgb(185,185,185)"/>
<polygon points="545.7,132.7 552.5,127.1 563.6,130.4 556.7,136.5" fill="rgb(185,185,185)"/>
<polygon points="440.5,159.9 454.7,156.3 464.7,159.6 450.4,163.3" fill="rgb(185,185,185)"/>
<polygon points="499.7,162.3 510.6,134.8 521.2,139.3 510.2,165.6" fill="rgb(158,158,158)"/>
<polygon points="361.4,156.2 375.0,153.2 384.2,156.6 370.5,159.7" fill="rgb(185,185,185)"/>
<polygon points="563.6,130.4 570.5,124.4 581.8,130.0 574.4,135.9" fill="rgb(185,185,185)"/>
<polygon points="521.2,139.3 528.0,134.2 538.8,138.3 532.0,143.9" fill="rgb(185,185,185)"/>
<polygon points="416.8,160.1 430.8,156.6 440.5,159.9 426.5,163.5" fill="rgb(185,185,185)"/>
<polygon points="339.0,155.8 352.5,152.8 361.4,156.2 347.9,159.3" fill="rgb(185,185,185)"/>
<polygon points="474.8,162.9 489.4,159.0 499.7,162.3 485.1,166.3" fill="rgb(185,185,185)"/>
<polygon points="538.8,138.3 545.7,132.7 556.7,136.5 549.8,142.6" fill="rgb(185,185,185)"/>
<polygon points="393.5,160.0 407.3,156.7 416.8,160.1 402.9,163.5" fill="rgb(185,185,185)"/>
<polygon points="316.9,155.1 330.3,152.3 339.0,155.8 325.7,158.7" fill="rgb(185,185,185)"/>
<polygon points="556.7,136.5 563.6,130.4 574.4,135.9 567.0,141.7" fill="rgb(185,185,185)"/>
<polygon points="450.4,163.3 464.7,159.6 474.8,162.9 460.5,166.7" fill="rgb(185,185,185)"/>
<polygon points="510.2,165.6 521.2,139.3 532.0,143.9 520.9,168.9" fill="rgb(158,158,158)"/>
<polygon points="370.5,159.7 384.2,156.6 393.5,160.0 379.8,163.3" fill="rgb(185,185,185)"/>
<polygon points="574.4,135.9 581.8,130.0 593.2,135.8 585.3,141.3" fill="rgb(185,185,185)"/>
<polygon points="532.0,143.9 538.8,138.3 549.8,142.6 542.9,148.6" fill="rgb(185,185,185)"/>
<polygon points="426.5,163.5 440.5,159.9 450.4,163.3 436.3,167.0" fill="rgb(185,185,185)"/>
<polygon points="347.9,159.3 361.4,156.2 370.5,159.7 357.0,162.9" fill="rgb(185,185,185)"/>
<polygon points="485.1,166.3 499.7,162.3 510.2,165.6 495.6,169.7" fill="rgb(185,185,185)"/>
<polygon points="549.8,142.6 556.7,136.5 567.0,141.7 559.6,147.4" fill="rgb(185,185,185)"/>
<polygon points="402.9,163.5 416.8,160.1 426.5,163.5 412.6,167.0" fill="rgb(185,185,185)"/>
<polygon points="325.7,158.7 339.0,155.8 347.9,159.3 334.5,162.3" fill="rgb(185,185,185)"/>
<polygon points="460.5,166.7 474.8,162.9 485.1,166.3 470.7,170.2" fill="rgb(185,185,185)"/>
<polygon points="520.9,168.9 532.0,143.9 542.9,148.6 531.8,172.3" fill="rgb(159,159,159)"/>
<polygon points="567.0,141.7 574.4,135.9 585.3,141.3 577.5,146.9" fill="rgb(185,185,185)"/>
<polygon points="303.6,157.9 316.9,155.1 325.7,158.7 312.3,161.6" fill="rgb(185,185,185)"/>
<polygon points="379.8,163.3 393.5,160.0 402.9,163.5 389.2,166.8" fill="rgb(185,185,185)"/>
<polygon points="585.3,141.3 593.2,135.8 604.9,139.5 596.5,145.3" fill="rgb(185,185,185)"/>
<polygon points="436.3,167.0 450.4,163.3 460.5,166.7 446.4,170.5" fill="rgb(185,185,185)"/>
<polygon points="542.9,148.6 549.8,142.6 559.6,147.4 552.3,153.2" fill="rgb(185,185,185)"/>
<polygon points="357.0,162.9 370.5,159.7 379.8,163.3 366.2,166.5" fill="rgb(185,185,185)"/>
<polygon points="495.6,169.7 510.2,165.6 520.9,168.9 506.3,173.2" fill="rgb(185,185,185)"/>
<polygon points="412.6,167.0 426.5,163.5 436.3,167.0 422.4,170.6" fill="rgb(185,185,185)"/>
<polygon points="334.5,162.3 347.9,159.3 357.0,162.9 343.5,166.0" fill="rgb(185,185,185)"/>
<polygon points="559.6,147.4 567.0,141.7 577.5,146.9 569.7,152.4" fill="rgb(185,185,185)"/>
<polygon points="470.7,170.2 485.1,166.3 495.6,169.7 481.2,173.8" fill="rgb(185,185,185)"/>
<polygon points="312.3,161.6 325.7,158.7 334.5,162.3 321.1,165.3" fill="rgb(185,185,185)"/>
<polygon points="389.2,166.8 402.9,163.5 412.6,167.0 398.8,170.5" fill="rgb(185,185,185)"/>
<polygon points="577.5,146.9 585.3,141.3 596.5,145.3 588.2,151.1" fill="rgb(185,185,185)"/>
<polygon points="531.8,172.3 542.9,148.6 552.3,153.2 541.2,171.7" fill="rgb(193,193,193)"/>
<polygon points="596.5,145.3 604.9,139.5 616.7,141.8 607.9,148.2" fill="rgb(185,185,185)"/>
<polygon points="290.4,160.7 303.6,157.9 312.3,161.6 299.0,164.5" fill="rgb(185,185,185)"/>
<polygon points="446.4,170.5 460.5,166.7 470.7,170.2 456.5,174.1" fill="rgb(185,185,185)"/>
<polygon points="366.2,166.5 379.8,163.3 389.2,166.8 375.6,170.2" fill="rgb(185,185,185)"/>
<polygon points="506.3,173.2 520.9,168.9 531.8,172.3 517.1,176.7" fill="rgb(185,185,185)"/>
<polygon points="552.3,153.2 559.6,147.4 569.7,152.4 561.9,157.9" fill="rgb(185,185,185)"/>
<polygon points="343.5,166.0 357.0,162.9 366.2,166.5 352.7,169.7" fill="rgb(185,185,185)"/>
<polygon points="422.4,170.6 436.3,167.0 446.4,170.5 432.3,174.3" fill="rgb(185,185,185)"/>
<polygon points="569.7,152.4 577.5,146.9 588.2,151.1 579.9,156.9" fill="rgb(185,185,185)"/>
<polygon points="481.2,173.8 495.6,169.7 506.3,173.2 491.8,177.4" fill="rgb(185,185,185)"/>
<polygon points="321.1,165.3 334.5,162.3 343.5,166.0 330.1,169.1" fill="rgb(185,185,185)"/>
<polygon points="398.8,170.5 412.6,167.0 422.4,170.6 408.5,174.2" fill="rgb(185,185,185)"/>
<polygon points="588.2,151.1 596.5,145.3 607.9,148.2 599.1,154.6" fill="rgb(185,185,185)"/>
<polygon points="299.0,164.5 312.3,161.6 321.1,165.3 307.7,168.3" fill="rgb(185,185,185)"/>
<polygon points="541.2,171.7 552.3,153.2 561.9,157.9 550.7,171.2" fill="rgb(191,191,191)"/>
<polygon points="456.5,174.1 470.7,170.2 481.2,173.8 466.9,177.8" fill="rgb(185,185,185)"/>
<polygon points="607.9,148.2 616.7,141.8 628.7,146.1 619.4,152.2" fill="rgb(185,185,185)"/>
<polygon points="375.6,170.2 389.2,166.8 398.8,170.5 385.1,174.0" fill="rgb(185,185,185)"/>
<polygon points="277.0,163.5 290.4,160.7 299.0,164.5 285.6,167.4" fill="rgb(185,185,185)"/>
<polygon points="517.1,176.7 531.8,172.3 541.2,171.7 526.6,176.8" fill="rgb(185,185,185)"/>
<polygon points="352.7,169.7 366.2,166.5 375.6,170.2 362.0,173.6" fill="rgb(185,185,185)"/>
<polygon points="432.3,174.3 446.4,170.5 456.5,174.1 442.5,178.0" fill="rgb(185,185,185)"/>
<polygon points="561.9,157.9 569.7,152.4 579.9,156.9 571.6,162.6" fill="rgb(185,185,185)"/>
<polygon points="491.8,177.4 506.3,173.2 517.1,176.7 502.5,181.0" fill="rgb(185,185,185)"/>
<polygon points="330.1,169.1 343.5,166.0 352.7,169.7 339.2,173.0" fill="rgb(185,185,185)"/>
<polygon points="579.9,156.9 588.2,151.1 599.1,154.6 590.3,161.0" fill="rgb(185,185,185)"/>
<polygon points="408.5,174.2 422.4,170.6 432.3,174.3 418.5,178.0" fill="rgb(185,185,185)"/>
<polygon points="307.7,168.3 321.1,165.3 330.1,169.1 316.6,172.2" fill="rgb(185,185,185)"/>
<polygon points="599.1,154.6 607.9,148.2 619.4,152.2 610.1,158.4" fill="rgb(185,185,185)"/>
<polygon points="466.9,177.8 481.2,173.8 491.8,177.4 477.4,181.5" fill="rgb(185,185,185)"/>
<polygon points="385.1,174.0 398.8,170.5 408.5,174.2 394.8,177.8" fill="rgb(185,185,185)"/>
<polygon points="619.4,152.2 628.7,146.1 640.9,150.6 631.1,156.4" fill="rgb(185,185,185)"/>
<polygon points="285.6,167.4 299.0,164.5 307.7,168.3 294.3,171.3" fill="rgb(185,185,185)"/>
<polygon points="550.7,171.2 561.9,157.9 571.6,162.6 560.4,170.7" fill="rgb(185,185,185)"/>
<polygon points="362.0,173.6 375.6,170.2 385.1,174.0 371.5,177.4" fill="rgb(185,185,185)"/>
<polygon points="442.5,178.0 456.5,174.1 466.9,177.8 452.8,181.8" fill="rgb(185,185,185)"/>
<polygon points="263.6,166.3 277.0,163.5 285.6,167.4 272.1,170.3" fill="rgb(185,185,185)"/>
<polygon points="526.6,176.8 541.2,171.7 550.7,171.2 536.2,176.1" fill="rgb(185,185,185)"/>
<polygon points="571.6,162.6 579.9,156.9 590.3,161.0 581.6,167.4" fill="rgb(185,185,185)"/>
<polygon points="339.2,173.0 352.7,169.7 362.0,173.6 348.4,176.9" fill="rgb(185,185,185)"/>
<polygon points="502.5,181.0 517.1,176.7 526.6,176.8 512.1,181.8" fill="rgb(185,185,185)"/>
<polygon points="418.5,178.0 432.3,174.3 442.5,178.0 428.5,181.8" fill="rgb(185,185,185)"/>
<polygon points="590.3,161.0 599.1,154.6 610.1,158.4 600.9,164.5" fill="rgb(185,185,185)"/>
<polygon points="316.6,172.2 330.1,169.1 339.2,173.0 325.7,176.2" fill="rgb(185,185,185)"/>
<polygon points="477.4,181.5 491.8,177.4 502.5,181.0 488.1,185.3" fill="rgb(185,185,185)"/>
<polygon points="394.8,177.8 408.5,174.2 418.5,178.0 404.6,181.7" fill="rgb(185,185,185)"/>
<polygon points="610.1,158.4 619.4,152.2 631.1,156.4 621.4,162.2" fill="rgb(185,185,185)"/>
<polygon points="631.1,156.4 640.9,150.6 653.3,155.1 643.1,160.6" fill="rgb(185,185,185)"/>
<polygon points="294.3,171.3 307.7,168.3 316.6,172.2 303.1,175.4" fill="rgb(185,185,185)"/>
<polygon points="371.5,177.4 385.1,174.0 394.8,177.8 381.1,181.4" fill="rgb(185,185,185)"/>
<polygon points="452.8,181.8 466.9,177.8 477.4,181.5 463.2,185.6" fill="rgb(185,185,185)"/>
<polygon points="272.1,170.3 285.6,167.4 294.3,171.3 280.8,174.4" fill="rgb(185,185,185)"/>
<polygon points="560.4,170.7 571.6,162.6 581.6,167.4 570.3,170.2" fill="rgb(185,185,185)"/>
<polygon points="348.4,176.9 362.0,173.6 371.5,177.4 357.9,180.9" fill="rgb(185,185,185)"/>
<polygon points="536.2,176.1 550.7,171.2 560.4,170.7 546.1,175.3" fill="rgb(185,185,185)"/>
<polygon points="250.2,169.2 263.6,166.3 272.1,170.3 258.6,173.3" fill="rgb(185,185,185)"/>
<polygon points="428.5,181.8 442.5,178.0 452.8,181.8 438.8,185.8" fill="rgb(185,185,185)"/>
<polygon points="581.6,167.4 590.3,161.0 600.9,164.5 591.7,170.6" fill="rgb(185,185,185)"/>
<polygon points="512.1,181.8 526.6,176.8 536.2,176.1 521.9,181.0" fill="rgb(185,185,185)"/>
<polygon points="325.7,176.2 339.2,173.0 348.4,176.9 334.9,180.2" fill="rgb(185,185,185)"/>
<polygon points="600.9,164.5 610.1,158.4 621.4,162.2 611.7,168.0" fill="rgb(185,185,185)"/>
<polygon points="404.6,181.7 418.5,178.0 428.5,181.8 414.7,185.7" fill="rgb(185,185,185)"/>
<polygon points="488.1,185.3 502.5,181.0 512.1,181.8 497.9,186.6" fill="rgb(185,185,185)"/>
<polygon points="303.1,175.4 316.6,172.2 325.7,176.2 312.1,179.4" fill="rgb(185,185,185)"/>
<polygon points="621.4,162.2 631.1,156.4 643.1,160.6 632.9,166.1" fill="rgb(185,185,185)"/>
<polygon points="643.1,160.6 653.3,155.1 666.0,159.7 655.2,164.9" fill="rgb(185,185,185)"/>
<polygon points="381.1,181.4 394.8,177.8 404.6,181.7 390.9,185.4" fill="rgb(185,185,185)"/>
<polygon points="280.8,174.4 294.3,171.3 303.1,175.4 289.6,178.5" fill="rgb(185,185,185)"/>
<polygon points="463.2,185.6 477.4,181.5 488.1,185.3 473.9,189.6" fill="rgb(185,185,185)"/>
<polygon points="357.9,180.9 371.5,177.4 381.1,181.4 367.4,185.0" fill="rgb(185,185,185)"/>
<polygon points="258.6,173.3 272.1,170.3 280.8,174.4 267.2,177.4" fill="rgb(185,185,185)"/>
<polygon points="570.3,170.2 581.6,167.4 591.7,170.6 580.4,173.4" fill="rgb(185,185,185)"/>
<polygon points="438.8,185.8 452.8,181.8 463.2,185.6 449.2,189.7" fill="rgb(185,185,185)"/>
<polygon points="546.1,175.3 560.4,170.7 570.3,170.2 556.1,175.7" fill="rgb(185,185,185)"/>
<polygon points="334.9,180.2 348.4,176.9 357.9,180.9 344.2,184.4" fill="rgb(185,185,185)"/>
<polygon points="236.5,172.0 250.2,169.2 258.6,173.3 244.9,176.2" fill="rgb(185,185,185)"/>
<polygon points="591.7,170.6 600.9,164.5 611.7,168.0 602.0,173.8" fill="rgb(185,185,185)"/>
<polygon points="521.9,181.0 536.2,176.1 546.1,175.3 531.9,179.9" fill="rgb(185,185,185)"/>
<polygon points="414.7,185.7 428.5,181.8 438.8,185.8 424.8,189.7" fill="rgb(185,185,185)"/>
<polygon points="312.1,179.4 325.7,176.2 334.9,180.2 321.3,183.6" fill="rgb(185,185,185)"/>
<polygon points="611.7,168.0 621.4,162.2 632.9,166.1 622.7,171.6" fill="rgb(185,185,185)"/>
<polygon points="497.9,186.6 512.1,181.8 521.9,181.0 507.8,185.6" fill="rgb(185,185,185)"/>
<polygon points="632.9,166.1 643.1,160.6 655.2,164.9 644.6,170.0" fill="rgb(185,185,185)"/>
<polygon points="655.2,164.9 666.0,159.7 678.8,164.3 667.6,169.2" fill="rgb(185,185,185)"/>
<polygon points="390.9,185.4 404.6,181.7 414.7,185.7 400.8,189.5" fill="rgb(185,185,185)"/>
<polygon points="289.6,178.5 303.1,175.4 312.1,179.4 298.5,182.7" fill="rgb(185,185,185)"/>
<polygon points="473.9,189.6 488.1,185.3 497.9,186.6 483.7,191.1" fill="rgb(185,185,185)"/>
<polygon points="267.2,177.4 280.8,174.4 289.6,178.5 275.9,181.7" fill="rgb(185,185,185)"/>
<polygon points="367.4,185.0 381.1,181.4 390.9,185.4 377.1,189.1" fill="rgb(185,185,185)"/>
<polygon points="449.2,189.7 463.2,185.6 473.9,189.6 459.7,193.8" fill="rgb(185,185,185)"/>
<polygon points="244.9,176.2 258.6,173.3 267.2,177.4 253.4,180.5" fill="rgb(185,185,185)"/>
<polygon points="344.2,184.4 357.9,180.9 367.4,185.0 353.7,188.5" fill="rgb(185,185,185)"/>
<polygon points="580.4,173.4 591.7,170.6 602.0,173.8 590.6,176.7" fill="rgb(185,185,185)"/>
<polygon points="556.1,175.7 570.3,170.2 580.4,173.4 566.4,178.6" fill="rgb(185,185,185)"/>
<polygon points="424.8,189.7 438.8,185.8 449.2,189.7 435.2,193.8" fill="rgb(185,185,185)"/>
<polygon points="222.7,174.9 236.5,172.0 244.9,176.2 231.0,179.3" fill="rgb(185,185,185)"/>
<polygon points="321.3,183.6 334.9,180.2 344.2,184.4 330.5,187.8" fill="rgb(185,185,185)"/>
<polygon points="602.0,173.8 611.7,168.0 622.7,171.6 612.6,177.1" fill="rgb(185,185,185)"/>
<polygon points="531.9,179.9 546.1,175.3 556.1,175.7 542.1,181.1" fill="rgb(185,185,185)"/>
<polygon points="622.7,171.6 632.9,166.1 644.6,170.0 633.9,175.2" fill="rgb(185,185,185)"/>
<polygon points="400.8,189.5 414.7,185.7 424.8,189.7 410.9,193.6" fill="rgb(185,185,185)"/>
<polygon points="298.5,182.7 312.1,179.4 321.3,183.6 307.6,187.0" fill="rgb(185,185,185)"/>
<polygon points="667.6,169.2 678.8,164.3 691.9,169.1 680.2,173.6" fill="rgb(185,185,185)"/>
<polygon points="507.8,185.6 521.9,181.0 531.9,179.9 517.9,184.2" fill="rgb(185,185,185)"/>
<polygon points="644.6,170.0 655.2,164.9 667.6,169.2 656.5,174.1" fill="rgb(185,185,185)"/>
<polygon points="275.9,181.7 289.6,178.5 298.5,182.7 284.8,186.0" fill="rgb(185,185,185)"/>
<polygon points="377.1,189.1 390.9,185.4 400.8,189.5 387.0,193.3" fill="rgb(185,185,185)"/>
<polygon points="483.7,191.1 497.9,186.6 507.8,185.6 493.7,189.7" fill="rgb(185,185,185)"/>
<polygon points="253.4,180.5 267.2,177.4 275.9,181.7 262.1,184.9" fill="rgb(185,185,185)"/>
<polygon points="459.7,193.8 473.9,189.6 483.7,191.1 469.7,195.3" fill="rgb(185,185,185)"/>
<polygon points="353.7,188.5 367.4,185.0 377.1,189.1 363.4,192.8" fill="rgb(185,185,185)"/>
<polygon points="231.0,179.3 244.9,176.2 253.4,180.5 239.5,183.7" fill="rgb(185,185,185)"/>
<polygon points="435.2,193.8 449.2,189.7 459.7,193.8 445.7,198.0" fill="rgb(185,185,185)"/>
<polygon points="330.5,187.8 344.2,184.4 353.7,188.5 340.0,192.1" fill="rgb(185,185,185)"/>
<polygon points="590.6,176.7 602.0,173.8 612.6,177.1 601.1,180.0" fill="rgb(185,185,185)"/>
<polygon points="566.4,178.6 580.4,173.4 590.6,176.7 576.8,181.6" fill="rgb(185,185,185)"/>
<polygon points="208.7,178.1 222.7,174.9 231.0,179.3 217.0,182.5" fill="rgb(185,185,185)"/>
<polygon points="307.6,187.0 321.3,183.6 330.5,187.8 316.8,191.3" fill="rgb(185,185,185)"/>
<polygon points="410.9,193.6 424.8,189.7 435.2,193.8 421.2,197.9" fill="rgb(185,185,185)"/>
<polygon points="612.6,177.1 622.7,171.6 633.9,175.2 623.3,180.4" fill="rgb(185,185,185)"/>
<polygon points="542.1,181.1 556.1,175.7 566.4,178.6 552.5,183.8" fill="rgb(185,185,185)"/>
<polygon points="680.2,173.6 691.9,169.1 705.1,173.9 693.0,178.1" fill="rgb(185,185,185)"/>
<polygon points="633.9,175.2 644.6,170.0 656.5,174.1 645.3,178.9" fill="rgb(185,185,185)"/>
<polygon points="656.5,174.1 667.6,169.2 680.2,173.6 668.6,178.2" fill="rgb(185,185,185)"/>
<polygon points="517.9,184.2 531.9,179.9 542.1,181.1 528.2,186.0" fill="rgb(185,185,185)"/>
<polygon points="284.8,186.0 298.5,182.7 307.6,187.0 293.8,190.4" fill="rgb(185,185,185)"/>
<polygon points="387.0,193.3 400.8,189.5 410.9,193.6 397.1,197.6" fill="rgb(185,185,185)"/>
<polygon points="493.7,189.7 507.8,185.6 517.9,184.2 503.9,187.6" fill="rgb(185,185,185)"/>
<polygon points="262.1,184.9 275.9,181.7 284.8,186.0 270.9,189.3" fill="rgb(185,185,185)"/>
<polygon points="363.4,192.8 377.1,189.1 387.0,193.3 373.2,197.1" fill="rgb(185,185,185)"/>
<polygon points="469.7,195.3 483.7,191.1 493.7,189.7 479.8,193.0" fill="rgb(185,185,185)"/>
<polygon points="239.5,183.7 253.4,180.5 262.1,184.9 248.1,188.1" fill="rgb(185,185,185)"/>
<polygon points="340.0,192.1 353.7,188.5 363.4,192.8 349.6,196.5" fill="rgb(185,185,185)"/>
<polygon points="445.7,198.0 459.7,193.8 469.7,195.3 455.7,199.4" fill="rgb(185,185,185)"/>
<polygon points="217.0,182.5 231.0,179.3 239.5,183.7 225.4,186.9" fill="rgb(185,185,185)"/>
<polygon points="316.8,191.3 330.5,187.8 340.0,192.1 326.2,195.7" fill="rgb(185,185,185)"/>
<polygon points="421.2,197.9 435.2,193.8 445.7,198.0 431.7,202.1" fill="rgb(185,185,185)"/>
<polygon points="601.1,180.0 612.6,177.1 623.3,180.4 611.8,183.4" fill="rgb(185,185,185)"/>
<polygon points="576.8,181.6 590.6,176.7 601.1,180.0 587.4,184.7" fill="rgb(185,185,185)"/>
<polygon points="194.5,181.3 208.7,178.1 217.0,182.5 202.7,185.7" fill="rgb(185,185,185)"/>
<polygon points="293.8,190.4 307.6,187.0 316.8,191.3 302.9,194.8" fill="rgb(185,185,185)"/>
<polygon points="552.5,183.8 566.4,178.6 576.8,181.6 563.0,186.5" fill="rgb(185,185,185)"/>
<polygon points="623.3,180.4 633.9,175.2 645.3,178.9 634.2,183.8" fill="rgb(185,185,185)"/>
<polygon points="693.0,178.1 705.1,173.9 718.6,178.8 706.0,182.7" fill="rgb(185,185,185)"/>
<polygon points="397.1,197.6 410.9,193.6 421.2,197.9 407.3,201.9" fill="rgb(185,185,185)"/>
<polygon points="645.3,178.9 656.5,174.1 668.6,178.2 657.0,182.7" fill="rgb(185,185,185)"/>
<polygon points="668.6,178.2 680.2,173.6 693.0,178.1 680.9,182.3" fill="rgb(185,185,185)"/>
<polygon points="528.2,186.0 542.1,181.1 552.5,183.8 538.7,188.5" fill="rgb(185,185,185)"/>
<polygon points="270.9,189.3 284.8,186.0 293.8,190.4 279.8,193.8" fill="rgb(185,185,185)"/>
<polygon points="373.2,197.1 387.0,193.3 397.1,197.6 383.2,201.5" fill="rgb(185,185,185)"/>
<polygon points="503.9,187.6 517.9,184.2 528.2,186.0 514.3,189.9" fill="rgb(185,185,185)"/>
<polygon points="248.1,188.1 262.1,184.9 270.9,189.3 256.8,192.7" fill="rgb(185,185,185)"/>
<polygon points="479.8,193.0 493.7,189.7 503.9,187.6 490.0,189.9" fill="rgb(185,185,185)"/>
<polygon points="349.6,196.5 363.4,192.8 373.2,197.1 359.3,200.9" fill="rgb(185,185,185)"/>
<polygon points="455.7,199.4 469.7,195.3 479.8,193.0 465.8,196.3" fill="rgb(185,185,185)"/>
<polygon points="225.4,186.9 239.5,183.7 248.1,188.1 233.9,191.4" fill="rgb(185,185,185)"/>
<polygon points="326.2,195.7 340.0,192.1 349.6,196.5 335.7,200.2" fill="rgb(185,185,185)"/>
<polygon points="431.7,202.1 445.7,198.0 455.7,199.4 441.7,203.5" fill="rgb(185,185,185)"/>
<polygon points="202.7,185.7 217.0,182.5 225.4,186.9 211.0,190.2" fill="rgb(185,185,185)"/>
<polygon points="302.9,194.8 316.8,191.3 326.2,195.7 312.2,199.4" fill="rgb(185,185,185)"/>
<polygon points="611.8,183.4 623.3,180.4 634.2,183.8 622.7,186.8" fill="rgb(185,185,185)"/>
<polygon points="587.4,184.7 601.1,180.0 611.8,183.4 598.3,187.8" fill="rgb(185,185,185)"/>
<polygon points="407.3,201.9 421.2,197.9 431.7,202.1 417.7,206.3" fill="rgb(185,185,185)"/>
<polygon points="706.0,182.7 718.6,178.8 732.4,183.8 719.3,187.3" fill="rgb(185,185,185)"/>
<polygon points="179.9,184.6 194.5,181.3 202.7,185.7 188.0,189.1" fill="rgb(185,185,185)"/>
<polygon points="563.0,186.5 576.8,181.6 587.4,184.7 573.8,189.3" fill="rgb(185,185,185)"/>
<polygon points="279.8,193.8 293.8,190.4 302.9,194.8 288.9,198.4" fill="rgb(185,185,185)"/>
<polygon points="634.2,183.8 645.3,178.9 657.0,182.7 645.4,187.2" fill="rgb(185,185,185)"/>
<polygon points="680.9,182.3 693.0,178.1 706.0,182.7 693.5,186.6" fill="rgb(185,185,185)"/>
<polygon points="657.0,182.7 668.6,178.2 680.9,182.3 668.9,186.5" fill="rgb(185,185,185)"/>
<polygon points="538.7,188.5 552.5,183.8 563.0,186.5 549.4,191.0" fill="rgb(185,185,185)"/>
<polygon points="383.2,201.5 397.1,197.6 407.3,201.9 393.3,206.0" fill="rgb(185,185,185)"/>
<polygon points="256.8,192.7 270.9,189.3 279.8,193.8 265.7,197.3" fill="rgb(185,185,185)"/>
<polygon points="514.3,189.9 528.2,186.0 538.7,188.5 524.9,192.3" fill="rgb(185,185,185)"/>
<polygon points="359.3,200.9 373.2,197.1 383.2,201.5 369.2,205.5" fill="rgb(185,185,185)"/>
<polygon points="490.0,189.9 503.9,187.6 514.3,189.9 500.5,192.3" fill="rgb(185,185,185)"/>
<polygon points="233.9,191.4 248.1,188.1 256.8,192.7 242.5,196.0" fill="rgb(185,185,185)"/>
<polygon points="335.7,200.2 349.6,196.5 359.3,200.9 345.4,204.8" fill="rgb(185,185,185)"/>
<polygon points="465.8,196.3 479.8,193.0 490.0,189.9 476.2,192.2" fill="rgb(185,185,185)"/>
<polygon points="211.0,190.2 225.4,186.9 233.9,191.4 219.4,194.8" fill="rgb(185,185,185)"/>
<polygon points="441.7,203.5 455.7,199.4 465.8,196.3 451.9,199.5" fill="rgb(185,185,185)"/>
<polygon points="312.2,199.4 326.2,195.7 335.7,200.2 321.7,204.0" fill="rgb(185,185,185)"/>
<polygon points="417.7,206.3 431.7,202.1 441.7,203.5 427.7,207.7" fill="rgb(185,185,185)"/>
<polygon points="188.0,189.1 202.7,185.7 211.0,190.2 196.3,193.6" fill="rgb(185,185,185)"/>
<polygon points="288.9,198.4 302.9,194.8 312.2,199.4 298.1,203.0" fill="rgb(185,185,185)"/>
<polygon points="598.3,187.8 611.8,183.4 622.7,186.8 609.3,191.0" fill="rgb(185,185,185)"/>
<polygon points="622.7,186.8 634.2,183.8 645.4,187.2 633.8,190.3" fill="rgb(185,185,185)"/>
<polygon points="393.3,206.0 407.3,201.9 417.7,206.3 403.7,210.5" fill="rgb(185,185,185)"/>
<polygon points="573.8,189.3 587.4,184.7 598.3,187.8 584.8,192.2" fill="rgb(185,185,185)"/>
<polygon points="693.5,186.6 706.0,182.7 719.3,187.3 706.3,190.9" fill="rgb(185,185,185)"/>
<polygon points="165.1,188.0 179.9,184.6 188.0,189.1 173.1,192.5" fill="rgb(185,185,185)"/>
<polygon points="265.7,197.3 279.8,193.8 288.9,198.4 274.7,202.0" fill="rgb(185,185,185)"/>
<polygon points="645.4,187.2 657.0,182.7 668.9,186.5 656.8,190.7" fill="rgb(185,185,185)"/>
<polygon points="668.9,186.5 680.9,182.3 693.5,186.6 681.0,190.4" fill="rgb(185,185,185)"/>
<polygon points="549.4,191.0 563.0,186.5 573.8,189.3 560.2,193.6" fill="rgb(185,185,185)"/>
<polygon points="369.2,205.5 383.2,201.5 393.3,206.0 379.3,210.0" fill="rgb(185,185,185)"/>
<polygon points="524.9,192.3 538.7,188.5 549.4,191.0 535.7,194.8" fill="rgb(185,185,185)"/>
<polygon points="242.5,196.0 256.8,192.7 265.7,197.3 251.3,200.7" fill="rgb(185,185,185)"/>
<polygon points="500.5,192.3 514.3,189.9 524.9,192.3 511.2,194.8" fill="rgb(185,185,185)"/>
<polygon points="345.4,204.8 359.3,200.9 369.2,205.5 355.2,209.4" fill="rgb(185,185,185)"/>
<polygon points="476.2,192.2 490.0,189.9 500.5,192.3 486.7,194.7" fill="rgb(185,185,185)"/>
<polygon points="219.4,194.8 233.9,191.4 242.5,196.0 228.0,199.4" fill="rgb(185,185,185)"/>
<polygon points="321.7,204.0 335.7,200.2 345.4,204.8 331.3,208.7" fill="rgb(185,185,185)"/>
<polygon points="451.9,199.5 465.8,196.3 476.2,192.2 462.3,194.5" fill="rgb(185,185,185)"/>
<polygon points="196.3,193.6 211.0,190.2 219.4,194.8 204.6,198.2" fill="rgb(185,185,185)"/>
<polygon points="298.1,203.0 312.2,199.4 321.7,204.0 307.5,207.8" fill="rgb(185,185,185)"/>
<polygon points="427.7,207.7 441.7,203.5 451.9,199.5 438.0,202.8" fill="rgb(185,185,185)"/>
<polygon points="403.7,210.5 417.7,206.3 427.7,207.7 413.8,211.8" fill="rgb(185,185,185)"/>
<polygon points="173.1,192.5 188.0,189.1 196.3,193.6 181.2,197.0" fill="rgb(185,185,185)"/>
<polygon points="274.7,202.0 288.9,198.4 298.1,203.0 283.9,206.8" fill="rgb(185,185,185)"/>
<polygon points="609.3,191.0 622.7,186.8 633.8,190.3 620.6,194.3" fill="rgb(185,185,185)"/>
<polygon points="633.8,190.3 645.4,187.2 656.8,190.7 645.2,193.8" fill="rgb(185,185,185)"/>
<polygon points="584.8,192.2 598.3,187.8 609.3,191.0 596.0,195.2" fill="rgb(185,185,185)"/>
<polygon points="379.3,210.0 393.3,206.0 403.7,210.5 389.6,214.7" fill="rgb(185,185,185)"/>
<polygon points="251.3,200.7 265.7,197.3 274.7,202.0 260.3,205.4" fill="rgb(185,185,185)"/>
<polygon points="681.0,190.4 693.5,186.6 706.3,190.9 693.3,194.4" fill="rgb(185,185,185)"/>
<polygon points="560.2,193.6 573.8,189.3 584.8,192.2 571.3,196.4" fill="rgb(185,185,185)"/>
<polygon points="656.8,190.7 668.9,186.5 681.0,190.4 668.4,194.3" fill="rgb(185,185,185)"/>
<polygon points="149.8,191.4 165.1,188.0 173.1,192.5 157.8,195.9" fill="rgb(185,185,185)"/>
<polygon points="535.7,194.8 549.4,191.0 560.2,193.6 546.7,197.2" fill="rgb(185,185,185)"/>
<polygon points="355.2,209.4 369.2,205.5 379.3,210.0 365.2,214.1" fill="rgb(185,185,185)"/>
<polygon points="511.2,194.8 524.9,192.3 535.7,194.8 522.0,197.3" fill="rgb(185,185,185)"/>
<polygon points="228.0,199.4 242.5,196.0 251.3,200.7 236.7,204.1" fill="rgb(185,185,185)"/>
<polygon points="486.7,194.7 500.5,192.3 511.2,194.8 497.5,197.2" fill="rgb(185,185,185)"/>
<polygon points="331.3,208.7 345.4,204.8 355.2,209.4 341.1,213.4" fill="rgb(185,185,185)"/>
<polygon points="204.6,198.2 219.4,194.8 228.0,199.4 213.1,202.8" fill="rgb(185,185,185)"/>
<polygon points="462.3,194.5 476.2,192.2 486.7,194.7 472.9,197.1" fill="rgb(185,185,185)"/>
<polygon points="307.5,207.8 321.7,204.0 331.3,208.7 317.1,212.6" fill="rgb(185,185,185)"/>
<polygon points="438.0,202.8 451.9,199.5 462.3,194.5 448.4,196.8" fill="rgb(185,185,185)"/>
<polygon points="181.2,197.0 196.3,193.6 204.6,198.2 189.5,201.7" fill="rgb(185,185,185)"/>
<polygon points="283.9,206.8 298.1,203.0 307.5,207.8 293.2,211.6" fill="rgb(185,185,185)"/>
<polygon points="413.8,211.8 427.7,207.7 438.0,202.8 424.0,206.1" fill="rgb(185,185,185)"/>
<polygon points="389.6,214.7 403.7,210.5 413.8,211.8 399.7,215.9" fill="rgb(185,185,185)"/>
<polygon points="157.8,195.9 173.1,192.5 181.2,197.0 165.9,200.5" fill="rgb(185,185,185)"/>
<polygon points="260.3,205.4 274.7,202.0 283.9,206.8 269.3,210.2" fill="rgb(185,185,185)"/>
<polygon points="620.6,194.3 633.8,190.3 645.2,193.8 632.1,197.6" fill="rgb(185,185,185)"/>
<polygon points="596.0,195.2 609.3,191.0 620.6,194.3 607.4,198.3" fill="rgb(185,185,185)"/>
<polygon points="365.2,214.1 379.3,210.0 389.6,214.7 375.4,218.9" fill="rgb(185,185,185)"/>
<polygon points="571.3,196.4 584.8,192.2 596.0,195.2 582.6,199.2" fill="rgb(185,185,185)"/>
<polygon points="645.2,193.8 656.8,190.7 668.4,194.3 656.7,197.4" fill="rgb(185,185,185)"/>
<polygon points="236.7,204.1 251.3,200.7 260.3,205.4 245.6,208.9" fill="rgb(185,185,185)"/>
<polygon points="668.4,194.3 681.0,190.4 693.3,194.4 680.3,197.9" fill="rgb(185,185,185)"/>
<polygon points="546.7,197.2 560.2,193.6 571.3,196.4 557.9,200.0" fill="rgb(185,185,185)"/>
<polygon points="134.2,194.9 149.8,191.4 157.8,195.9 142.1,199.5" fill="rgb(185,185,185)"/>
<polygon points="522.0,197.3 535.7,194.8 546.7,197.2 533.1,199.9" fill="rgb(185,185,185)"/>
<polygon points="341.1,213.4 355.2,209.4 365.2,214.1 351.0,218.3" fill="rgb(185,185,185)"/>
<polygon points="213.1,202.8 228.0,199.4 236.7,204.1 221.8,207.6" fill="rgb(185,185,185)"/>
<polygon points="497.5,197.2 511.2,194.8 522.0,197.3 508.4,199.9" fill="rgb(185,185,185)"/>
<polygon points="317.1,212.6 331.3,208.7 341.1,213.4 326.8,217.5" fill="rgb(185,185,185)"/>
<polygon points="472.9,197.1 486.7,194.7 497.5,197.2 483.7,199.7" fill="rgb(185,185,185)"/>
<polygon points="189.5,201.7 204.6,198.2 213.1,202.8 197.9,206.4" fill="rgb(185,185,185)"/>
<polygon points="448.4,196.8 462.3,194.5 472.9,197.1 459.1,199.5" fill="rgb(185,185,185)"/>
<polygon points="293.2,211.6 307.5,207.8 317.1,212.6 302.6,216.5" fill="rgb(185,185,185)"/>
<polygon points="424.0,206.1 438.0,202.8 448.4,196.8 434.5,199.1" fill="rgb(185,185,185)"/>
<polygon points="165.9,200.5 181.2,197.0 189.5,201.7 174.0,205.2" fill="rgb(185,185,185)"/>
<polygon points="269.3,210.2 283.9,206.8 293.2,211.6 278.6,215.1" fill="rgb(185,185,185)"/>
<polygon points="399.7,215.9 413.8,211.8 424.0,206.1 410.0,209.5" fill="rgb(185,185,185)"/>
<polygon points="375.4,218.9 389.6,214.7 399.7,215.9 385.5,220.1" fill="rgb(185,185,185)"/>
<polygon points="245.6,208.9 260.3,205.4 269.3,210.2 254.6,213.7" fill="rgb(185,185,185)"/>
<polygon points="142.1,199.5 157.8,195.9 165.9,200.5 150.0,204.2" fill="rgb(185,185,185)"/>
<polygon points="632.1,197.6 645.2,193.8 656.7,197.4 643.8,201.0" fill="rgb(185,185,185)"/>
<polygon points="607.4,198.3 620.6,194.3 632.1,197.6 619.0,201.4" fill="rgb(185,185,185)"/>
<polygon points="582.6,199.2 596.0,195.2 607.4,198.3 594.2,202.1" fill="rgb(185,185,185)"/>
<polygon points="351.0,218.3 365.2,214.1 375.4,218.9 361.1,223.2" fill="rgb(185,185,185)"/>
<polygon points="557.9,200.0 571.3,196.4 582.6,199.2 569.3,202.8" fill="rgb(185,185,185)"/>
<polygon points="221.8,207.6 236.7,204.1 245.6,208.9 230.5,212.4" fill="rgb(185,185,185)"/>
<polygon points="656.7,197.4 668.4,194.3 680.3,197.9 668.6,201.1" fill="rgb(185,185,185)"/>
<polygon points="533.1,199.9 546.7,197.2 557.9,200.0 544.4,202.7" fill="rgb(185,185,185)"/>
<polygon points="118.1,198.6 134.2,194.9 142.1,199.5 125.9,203.2" fill="rgb(185,185,185)"/>
<polygon points="508.4,199.9 522.0,197.3 533.1,199.9 519.5,202.5" fill="rgb(185,185,185)"/>
<polygon points="326.8,217.5 341.1,213.4 351.0,218.3 336.6,222.4" fill="rgb(185,185,185)"/>
<polygon points="197.9,206.4 213.1,202.8 221.8,207.6 206.5,211.2" fill="rgb(185,185,185)"/>
<polygon points="483.7,199.7 497.5,197.2 508.4,199.9 494.7,202.4" fill="rgb(185,185,185)"/>
<polygon points="302.6,216.5 317.1,212.6 326.8,217.5 312.3,221.5" fill="rgb(185,185,185)"/>
<polygon points="459.1,199.5 472.9,197.1 483.7,199.7 469.9,202.2" fill="rgb(185,185,185)"/>
<polygon points="174.0,205.2 189.5,201.7 197.9,206.4 182.4,210.0" fill="rgb(185,185,185)"/>
<polygon points="434.5,199.1 448.4,196.8 459.1,199.5 445.1,201.9" fill="rgb(185,185,185)"/>
<polygon points="278.6,215.1 293.2,211.6 302.6,216.5 288.0,220.1" fill="rgb(185,185,185)"/>
<polygon points="410.0,209.5 424.0,206.1 434.5,199.1 420.4,201.4" fill="rgb(185,185,185)"/>
<polygon points="254.6,213.7 269.3,210.2 278.6,215.1 263.7,218.7" fill="rgb(185,185,185)"/>
<polygon points="150.0,204.2 165.9,200.5 174.0,205.2 158.1,208.9" fill="rgb(185,185,185)"/>
<polygon points="385.5,220.1 399.7,215.9 410.0,209.5 395.8,212.8" fill="rgb(185,185,185)"/>
<polygon points="361.1,223.2 375.4,218.9 385.5,220.1 371.2,224.3" fill="rgb(185,185,185)"/>
<polygon points="230.5,212.4 245.6,208.9 254.6,213.7 239.5,217.3" fill="rgb(185,185,185)"/>
<polygon points="125.9,203.2 142.1,199.5 150.0,204.2 133.8,207.9" fill="rgb(185,185,185)"/>
<polygon points="619.0,201.4 632.1,197.6 643.8,201.0 630.9,204.6" fill="rgb(185,185,185)"/>
<polygon points="594.2,202.1 607.4,198.3 619.0,201.4 605.9,205.1" fill="rgb(185,185,185)"/>
<polygon points="643.8,201.0 656.7,197.4 668.6,201.1 655.8,204.4" fill="rgb(185,185,185)"/>
<polygon points="569.3,202.8 582.6,199.2 594.2,202.1 580.9,205.6" fill="rgb(185,185,185)"/>
<polygon points="336.6,222.4 351.0,218.3 361.1,223.2 346.7,227.5" fill="rgb(185,185,185)"/>
<polygon points="544.4,202.7 557.9,200.0 569.3,202.8 555.9,205.7" fill="rgb(185,185,185)"/>
<polygon points="206.5,211.2 221.8,207.6 230.5,212.4 215.2,216.0" fill="rgb(185,185,185)"/>
<polygon points="519.5,202.5 533.1,199.9 544.4,202.7 530.9,205.5" fill="rgb(185,185,185)"/>
<polygon points="494.7,202.4 508.4,199.9 519.5,202.5 505.9,205.2" fill="rgb(185,185,185)"/>
<polygon points="312.3,221.5 326.8,217.5 336.6,222.4 322.1,226.6" fill="rgb(185,185,185)"/>
<polygon points="101.5,202.3 118.1,198.6 125.9,203.2 109.2,207.0" fill="rgb(185,185,185)"/>
<polygon points="469.9,202.2 483.7,199.7 494.7,202.4 480.9,205.0" fill="rgb(185,185,185)"/>
<polygon points="182.4,210.0 197.9,206.4 206.5,211.2 190.8,214.8" fill="rgb(185,185,185)"/>
<polygon points="288.0,220.1 302.6,216.5 312.3,221.5 297.5,225.1" fill="rgb(185,185,185)"/>
<polygon points="445.1,201.9 459.1,199.5 469.9,202.2 456.0,204.7" fill="rgb(185,185,185)"/>
<polygon points="420.4,201.4 434.5,199.1 445.1,201.9 431.1,204.3" fill="rgb(185,185,185)"/>
<polygon points="158.1,208.9 174.0,205.2 182.4,210.0 166.4,213.7" fill="rgb(185,185,185)"/>
<polygon points="263.7,218.7 278.6,215.1 288.0,220.1 273.0,223.7" fill="rgb(185,185,185)"/>
<polygon points="395.8,212.8 410.0,209.5 420.4,201.4 406.3,203.8" fill="rgb(185,185,185)"/>
<polygon points="239.5,217.3 254.6,213.7 263.7,218.7 248.5,222.3" fill="rgb(185,185,185)"/>
<polygon points="371.2,224.3 385.5,220.1 395.8,212.8 381.5,216.2" fill="rgb(185,185,185)"/>
<polygon points="133.8,207.9 150.0,204.2 158.1,208.9 141.8,212.7" fill="rgb(185,185,185)"/>
<polygon points="346.7,227.5 361.1,223.2 371.2,224.3 356.7,228.6" fill="rgb(185,185,185)"/>
<polygon points="215.2,216.0 230.5,212.4 239.5,217.3 224.0,221.0" fill="rgb(185,185,185)"/>
<polygon points="605.9,205.1 619.0,201.4 630.9,204.6 617.9,208.1" fill="rgb(185,185,185)"/>
<polygon points="630.9,204.6 643.8,201.0 655.8,204.4 643.0,207.8" fill="rgb(185,185,185)"/>
<polygon points="580.9,205.6 594.2,202.1 605.9,205.1 592.7,208.6" fill="rgb(185,185,185)"/>
<polygon points="555.9,205.7 569.3,202.8 580.9,205.6 567.6,208.7" fill="rgb(185,185,185)"/>
<polygon points="109.2,207.0 125.9,203.2 133.8,207.9 117.0,211.8" fill="rgb(185,185,185)"/>
<polygon points="322.1,226.6 336.6,222.4 346.7,227.5 332.0,231.8" fill="rgb(185,185,185)"/>
<polygon points="530.9,205.5 544.4,202.7 555.9,205.7 542.4,208.6" fill="rgb(185,185,185)"/>
<polygon points="505.9,205.2 519.5,202.5 530.9,205.5 517.2,208.3" fill="rgb(185,185,185)"/>
<polygon points="190.8,214.8 206.5,211.2 215.2,216.0 199.5,219.8" fill="rgb(185,185,185)"/>
<polygon points="480.9,205.0 494.7,202.4 505.9,205.2 492.1,207.9" fill="rgb(185,185,185)"/>
<polygon points="297.5,225.1 312.3,221.5 322.1,226.6 307.2,230.3" fill="rgb(185,185,185)"/>
<polygon points="456.0,204.7 469.9,202.2 480.9,205.0 467.0,207.6" fill="rgb(185,185,185)"/>
<polygon points="84.4,206.2 101.5,202.3 109.2,207.0 92.0,210.9" fill="rgb(185,185,185)"/>
<polygon points="166.4,213.7 182.4,210.0 190.8,214.8 174.8,218.6" fill="rgb(185,185,185)"/>
<polygon points="273.0,223.7 288.0,220.1 297.5,225.1 282.5,228.8" fill="rgb(185,185,185)"/>
<polygon points="431.1,204.3 445.1,201.9 456.0,204.7 441.9,207.3" fill="rgb(185,185,185)"/>
<polygon points="406.3,203.8 420.4,201.4 431.1,204.3 416.9,206.8" fill="rgb(185,185,185)"/>
<polygon points="248.5,222.3 263.7,218.7 273.0,223.7 257.8,227.4" fill="rgb(185,185,185)"/>
<polygon points="141.8,212.7 158.1,208.9 166.4,213.7 149.9,217.5" fill="rgb(185,185,185)"/>
<polygon points="381.5,216.2 395.8,212.8 406.3,203.8 391.9,206.1" fill="rgb(185,185,185)"/>
<polygon points="224.0,221.0 239.5,217.3 248.5,222.3 233.0,226.0" fill="rgb(185,185,185)"/>
<polygon points="356.7,228.6 371.2,224.3 381.5,216.2 367.0,219.6" fill="rgb(185,185,185)"/>
<polygon points="117.0,211.8 133.8,207.9 141.8,212.7 124.9,216.6" fill="rgb(185,185,185)"/>
<polygon points="332.0,231.8 346.7,227.5 356.7,228.6 342.0,232.9" fill="rgb(185,185,185)"/>
<polygon points="592.7,208.6 605.9,205.1 617.9,208.1 604.8,211.6" fill="rgb(185,185,185)"/>
<polygon points="199.5,219.8 215.2,216.0 224.0,221.0 208.2,224.8" fill="rgb(185,185,185)"/>
<polygon points="617.9,208.1 630.9,204.6 643.0,207.8 630.1,211.2" fill="rgb(185,185,185)"/>
<polygon points="567.6,208.7 580.9,205.6 592.7,208.6 579.5,211.7" fill="rgb(185,185,185)"/>
<polygon points="542.4,208.6 555.9,205.7 567.6,208.7 554.2,211.7" fill="rgb(185,185,185)"/>
<polygon points="517.2,208.3 530.9,205.5 542.4,208.6 528.9,211.5" fill="rgb(185,185,185)"/>
<polygon points="307.2,230.3 322.1,226.6 332.0,231.8 317.1,235.5" fill="rgb(185,185,185)"/>
<polygon points="492.1,207.9 505.9,205.2 517.2,208.3 503.5,211.1" fill="rgb(185,185,185)"/>
<polygon points="92.0,210.9 109.2,207.0 117.0,211.8 99.7,215.7" fill="rgb(185,185,185)"/>
<polygon points="174.8,218.6 190.8,214.8 199.5,219.8 183.3,223.6" fill="rgb(185,185,185)"/>
<polygon points="467.0,207.6 480.9,205.0 492.1,207.9 478.2,210.6" fill="rgb(185,185,185)"/>
<polygon points="282.5,228.8 297.5,225.1 307.2,230.3 292.1,234.0" fill="rgb(185,185,185)"/>
<polygon points="441.9,207.3 456.0,204.7 467.0,207.6 453.0,210.3" fill="rgb(185,185,185)"/>
<polygon points="416.9,206.8 431.1,204.3 441.9,207.3 427.8,209.8" fill="rgb(185,185,185)"/>
<polygon points="257.8,227.4 273.0,223.7 282.5,228.8 267.2,232.5" fill="rgb(185,185,185)"/>
<polygon points="149.9,217.5 166.4,213.7 174.8,218.6 158.2,222.5" fill="rgb(185,185,185)"/>
<polygon points="391.9,206.1 406.3,203.8 416.9,206.8 402.6,209.1" fill="rgb(185,185,185)"/>
<polygon points="233.0,226.0 248.5,222.3 257.8,227.4 242.2,231.2" fill="rgb(185,185,185)"/>
<polygon points="367.0,219.6 381.5,216.2 391.9,206.1 377.4,208.5" fill="rgb(185,185,185)"/>
<polygon points="124.9,216.6 141.8,212.7 149.9,217.5 132.9,221.5" fill="rgb(185,185,185)"/>
<polygon points="342.0,232.9 356.7,228.6 367.0,219.6 352.2,223.1" fill="rgb(185,185,185)"/>
<polygon points="208.2,224.8 224.0,221.0 233.0,226.0 217.1,229.8" fill="rgb(185,185,185)"/>
<polygon points="317.1,235.5 332.0,231.8 342.0,232.9 327.1,236.6" fill="rgb(185,185,185)"/>
<polygon points="579.5,211.7 592.7,208.6 604.8,211.6 591.7,214.9" fill="rgb(185,185,185)"/>
<polygon points="604.8,211.6 617.9,208.1 630.1,211.2 617.1,214.6" fill="rgb(185,185,185)"/>
<polygon points="99.7,215.7 117.0,211.8 124.9,216.6 107.5,220.6" fill="rgb(185,185,185)"/>
<polygon points="554.2,211.7 567.6,208.7 579.5,211.7 566.2,214.9" fill="rgb(185,185,185)"/>
<polygon points="528.9,211.5 542.4,208.6 554.2,211.7 540.7,214.8" fill="rgb(185,185,185)"/>
<polygon points="183.3,223.6 199.5,219.8 208.2,224.8 191.9,228.6" fill="rgb(185,185,185)"/>
<polygon points="503.5,211.1 517.2,208.3 528.9,211.5 515.2,214.5" fill="rgb(185,185,185)"/>
<polygon points="292.1,234.0 307.2,230.3 317.1,235.5 301.9,239.3" fill="rgb(185,185,185)"/>
<polygon points="478.2,210.6 492.1,207.9 503.5,211.1 489.7,214.0" fill="rgb(185,185,185)"/>
<polygon points="453.0,210.3 467.0,207.6 478.2,210.6 464.2,213.3" fill="rgb(185,185,185)"/>
<polygon points="158.2,222.5 174.8,218.6 183.3,223.6 166.6,227.5" fill="rgb(185,185,185)"/>
<polygon points="267.2,232.5 282.5,228.8 292.1,234.0 276.7,237.8" fill="rgb(185,185,185)"/>
<polygon points="427.8,209.8 441.9,207.3 453.0,210.3 438.8,212.9" fill="rgb(185,185,185)"/>
<polygon points="402.6,209.1 416.9,206.8 427.8,209.8 413.4,212.2" fill="rgb(185,185,185)"/>
<polygon points="242.2,231.2 257.8,227.4 267.2,232.5 251.5,236.4" fill="rgb(185,185,185)"/>
<polygon points="132.9,221.5 149.9,217.5 158.2,222.5 141.1,226.5" fill="rgb(185,185,185)"/>
<polygon points="377.4,208.5 391.9,206.1 402.6,209.1 388.0,211.4" fill="rgb(185,185,185)"/>
<polygon points="217.1,229.8 233.0,226.0 242.2,231.2 226.2,235.0" fill="rgb(185,185,185)"/>
<polygon points="352.2,223.1 367.0,219.6 377.4,208.5 362.6,210.9" fill="rgb(185,185,185)"/>
<polygon points="107.5,220.6 124.9,216.6 132.9,221.5 115.4,225.6" fill="rgb(185,185,185)"/>
<polygon points="327.1,236.6 342.0,232.9 352.2,223.1 337.2,237.1" fill="rgb(185,185,185)"/>
<polygon points="191.9,228.6 208.2,224.8 217.1,229.8 200.7,233.8" fill="rgb(185,185,185)"/>
<polygon points="591.7,214.9 604.8,211.6 617.1,214.6 604.1,218.1" fill="rgb(185,185,185)"/>
<polygon points="566.2,214.9 579.5,211.7 591.7,214.9 578.4,218.2" fill="rgb(185,185,185)"/>
<polygon points="301.9,239.3 317.1,235.5 327.1,236.6 311.8,244.1" fill="rgb(185,185,185)"/>
<polygon points="540.7,214.8 554.2,211.7 566.2,214.9 552.7,218.2" fill="rgb(185,185,185)"/>
<polygon points="515.2,214.5 528.9,211.5 540.7,214.8 527.0,217.9" fill="rgb(185,185,185)"/>
<polygon points="489.7,214.0 503.5,211.1 515.2,214.5 501.3,217.5" fill="rgb(185,185,185)"/>
<polygon points="166.6,227.5 183.3,223.6 191.9,228.6 175.2,232.6" fill="rgb(185,185,185)"/>
<polygon points="276.7,237.8 292.1,234.0 301.9,239.3 286.4,243.1" fill="rgb(185,185,185)"/>
<polygon points="464.2,213.3 478.2,210.6 489.7,214.0 475.7,216.9" fill="rgb(185,185,185)"/>
<polygon points="438.8,212.9 453.0,210.3 464.2,213.3 450.0,216.1" fill="rgb(185,185,185)"/>
<polygon points="251.5,236.4 267.2,232.5 276.7,237.8 260.9,241.7" fill="rgb(185,185,185)"/>
<polygon points="413.4,212.2 427.8,209.8 438.8,212.9 424.4,215.3" fill="rgb(185,185,185)"/>
<polygon points="141.1,226.5 158.2,222.5 166.6,227.5 149.5,231.6" fill="rgb(185,185,185)"/>
<polygon points="388.0,211.4 402.6,209.1 413.4,212.2 398.8,214.2" fill="rgb(185,185,185)"/>
<polygon points="226.2,235.0 242.2,231.2 251.5,236.4 235.4,240.3" fill="rgb(185,185,185)"/>
<polygon points="362.6,210.9 377.4,208.5 388.0,211.4 373.2,213.4" fill="rgb(185,185,185)"/>
<polygon points="115.4,225.6 132.9,221.5 141.1,226.5 123.5,230.6" fill="rgb(185,185,185)"/>
<polygon points="337.2,237.1 352.2,223.1 362.6,210.9 347.6,237.2" fill="rgb(168,168,168)"/>
<polygon points="200.7,233.8 217.1,229.8 226.2,235.0 209.7,239.0" fill="rgb(185,185,185)"/>
<polygon points="311.8,244.1 327.1,236.6 337.2,237.1 321.9,249.0" fill="rgb(185,185,185)"/>
<polygon points="578.4,218.2 591.7,214.9 604.1,218.1 590.9,221.6" fill="rgb(185,185,185)"/>
<polygon points="552.7,218.2 566.2,214.9 578.4,218.2 565.0,221.6" fill="rgb(185,185,185)"/>
<polygon points="527.0,217.9 540.7,214.8 552.7,218.2 539.1,221.4" fill="rgb(185,185,185)"/>
<polygon points="175.2,232.6 191.9,228.6 200.7,233.8 183.9,237.8" fill="rgb(185,185,185)"/>
<polygon points="501.3,217.5 515.2,214.5 527.0,217.9 513.2,221.1" fill="rgb(185,185,185)"/>
<polygon points="286.4,243.1 301.9,239.3 311.8,244.1 296.3,248.5" fill="rgb(185,185,185)"/>
<polygon points="475.7,216.9 489.7,214.0 501.3,217.5 487.3,220.5" fill="rgb(185,185,185)"/>
<polygon points="450.0,216.1 464.2,213.3 475.7,216.9 461.5,219.8" fill="rgb(185,185,185)"/>
<polygon points="260.9,241.7 276.7,237.8 286.4,243.1 270.5,247.1" fill="rgb(185,185,185)"/>
<polygon points="149.5,231.6 166.6,227.5 175.2,232.6 157.9,236.7" fill="rgb(185,185,185)"/>
<polygon points="424.4,215.3 438.8,212.9 450.0,216.1 435.6,218.4" fill="rgb(185,185,185)"/>
<polygon points="398.8,214.2 413.4,212.2 424.4,215.3 409.8,217.2" fill="rgb(185,185,185)"/>
<polygon points="235.4,240.3 251.5,236.4 260.9,241.7 244.7,245.6" fill="rgb(185,185,185)"/>
<polygon points="373.2,213.4 388.0,211.4 398.8,214.2 383.9,215.9" fill="rgb(185,185,185)"/>
<polygon points="123.5,230.6 141.1,226.5 149.5,231.6 131.7,235.7" fill="rgb(185,185,185)"/>
<polygon points="347.6,237.2 362.6,210.9 373.2,213.4 358.1,243.2" fill="rgb(158,158,158)"/>
<polygon points="209.7,239.0 226.2,235.0 235.4,240.3 218.8,244.3" fill="rgb(185,185,185)"/>
<polygon points="321.9,249.0 337.2,237.1 347.6,237.2 332.2,253.9" fill="rgb(185,185,185)"/>
<polygon points="183.9,237.8 200.7,233.8 209.7,239.0 192.8,243.1" fill="rgb(185,185,185)"/>
<polygon points="296.3,248.5 311.8,244.1 321.9,249.0 306.3,254.0" fill="rgb(185,185,185)"/>
<polygon points="565.0,221.6 578.4,218.2 590.9,221.6 577.5,225.1" fill="rgb(185,185,185)"/>
<polygon points="539.1,221.4 552.7,218.2 565.0,221.6 551.4,225.0" fill="rgb(185,185,185)"/>
<polygon points="513.2,221.1 527.0,217.9 539.1,221.4 525.3,224.8" fill="rgb(185,185,185)"/>
<polygon points="487.3,220.5 501.3,217.5 513.2,221.1 499.2,224.3" fill="rgb(185,185,185)"/>
<polygon points="270.5,247.1 286.4,243.1 296.3,248.5 280.3,252.5" fill="rgb(185,185,185)"/>
<polygon points="157.9,236.7 175.2,232.6 183.9,237.8 166.5,242.0" fill="rgb(185,185,185)"/>
<polygon points="461.5,219.8 475.7,216.9 487.3,220.5 473.1,223.6" fill="rgb(185,185,185)"/>
<polygon points="435.6,218.4 450.0,216.1 461.5,219.8 447.0,223.2" fill="rgb(185,185,185)"/>
<polygon points="409.8,217.2 424.4,215.3 435.6,218.4 421.0,220.2" fill="rgb(185,185,185)"/>
<polygon points="244.7,245.6 260.9,241.7 270.5,247.1 254.3,251.1" fill="rgb(185,185,185)"/>
<polygon points="131.7,235.7 149.5,231.6 157.9,236.7 140.1,241.0" fill="rgb(185,185,185)"/>
<polygon points="383.9,215.9 398.8,214.2 409.8,217.2 394.9,218.5" fill="rgb(185,185,185)"/>
<polygon points="218.8,244.3 235.4,240.3 244.7,245.6 228.1,249.7" fill="rgb(185,185,185)"/>
<polygon points="358.1,243.2 373.2,213.4 383.9,215.9 368.8,249.2" fill="rgb(158,158,158)"/>
<polygon points="332.2,253.9 347.6,237.2 358.1,243.2 342.7,259.5" fill="rgb(185,185,185)"/>
<polygon points="192.8,243.1 209.7,239.0 218.8,244.3 201.8,248.5" fill="rgb(185,185,185)"/>
<polygon points="306.3,254.0 321.9,249.0 332.2,253.9 316.5,259.6" fill="rgb(185,185,185)"/>
<polygon points="551.4,225.0 565.0,221.6 577.5,225.1 564.0,228.7" fill="rgb(185,185,185)"/>
<polygon points="525.3,224.8 539.1,221.4 551.4,225.0 537.7,228.5" fill="rgb(185,185,185)"/>
<polygon points="166.5,242.0 183.9,237.8 192.8,243.1 175.3,247.3" fill="rgb(185,185,185)"/>
<polygon points="280.3,252.5 296.3,248.5 306.3,254.0 290.3,258.1" fill="rgb(185,185,185)"/>
<polygon points="499.2,224.3 513.2,221.1 525.3,224.8 511.3,228.1" fill="rgb(185,185,185)"/>
<polygon points="473.1,223.6 487.3,220.5 499.2,224.3 485.0,227.6" fill="rgb(185,185,185)"/>
<polygon points="447.0,223.2 461.5,219.8 473.1,223.6 458.7,227.2" fill="rgb(185,185,185)"/>
<polygon points="254.3,251.1 270.5,247.1 280.3,252.5 263.9,256.6" fill="rgb(185,185,185)"/>
<polygon points="421.0,220.2 435.6,218.4 447.0,223.2 432.4,227.2" fill="rgb(185,185,185)"/>
<polygon points="140.1,241.0 157.9,236.7 166.5,242.0 148.6,246.3" fill="rgb(185,185,185)"/>
<polygon points="394.9,218.5 409.8,217.2 421.0,220.2 406.0,221.1" fill="rgb(185,185,185)"/>
<polygon points="228.1,249.7 244.7,245.6 254.3,251.1 237.5,255.2" fill="rgb(185,185,185)"/>
<polygon points="368.8,249.2 383.9,215.9 394.9,218.5 379.7,255.4" fill="rgb(158,158,158)"/>
<polygon points="342.7,259.5 358.1,243.2 368.8,249.2 353.3,265.3" fill="rgb(185,185,185)"/>
<polygon points="201.8,248.5 218.8,244.3 228.1,249.7 210.9,253.9" fill="rgb(185,185,185)"/>
<polygon points="316.5,259.6 332.2,253.9 342.7,259.5 326.9,265.3" fill="rgb(185,185,185)"/>
<polygon points="175.3,247.3 192.8,243.1 201.8,248.5 184.2,252.7" fill="rgb(185,185,185)"/>
<polygon points="290.3,258.1 306.3,254.0 316.5,259.6 300.4,263.7" fill="rgb(185,185,185)"/>
<polygon points="537.7,228.5 551.4,225.0 564.0,228.7 550.2,232.3" fill="rgb(185,185,185)"/>
<polygon points="511.3,228.1 525.3,224.8 537.7,228.5 523.7,232.0" fill="rgb(185,185,185)"/>
<polygon points="485.0,227.6 499.2,224.3 511.3,228.1 497.1,231.6" fill="rgb(185,185,185)"/>
<polygon points="458.7,227.2 473.1,223.6 485.0,227.6 470.5,231.2" fill="rgb(185,185,185)"/>
<polygon points="263.9,256.6 280.3,252.5 290.3,258.1 273.8,262.2" fill="rgb(185,185,185)"/>
<polygon points="148.6,246.3 166.5,242.0 175.3,247.3 157.2,251.7" fill="rgb(185,185,185)"/>
<polygon points="432.4,227.2 447.0,223.2 458.7,227.2 444.0,231.1" fill="rgb(185,185,185)"/>
<polygon points="406.0,221.1 421.0,220.2 432.4,227.2 417.4,232.0" fill="rgb(185,185,185)"/>
<polygon points="237.5,255.2 254.3,251.1 263.9,256.6 247.1,260.8" fill="rgb(185,185,185)"/>
<polygon points="379.7,255.4 394.9,218.5 406.0,221.1 390.8,261.7" fill="rgb(158,158,158)"/>
<polygon points="353.3,265.3 368.8,249.2 379.7,255.4 364.1,271.2" fill="rgb(185,185,185)"/>
<polygon points="210.9,253.9 228.1,249.7 237.5,255.2 220.3,259.5" fill="rgb(185,185,185)"/>
<polygon points="326.9,265.3 342.7,259.5 353.3,265.3 337.4,271.1" fill="rgb(185,185,185)"/>
<polygon points="184.2,252.7 201.8,248.5 210.9,253.9 193.2,258.3" fill="rgb(185,185,185)"/>
<polygon points="300.4,263.7 316.5,259.6 326.9,265.3 310.7,269.5" fill="rgb(185,185,185)"/>
<polygon points="523.7,232.0 537.7,228.5 550.2,232.3 536.2,236.0" fill="rgb(185,185,185)"/>
<polygon points="497.1,231.6 511.3,228.1 523.7,232.0 509.4,235.6" fill="rgb(185,185,185)"/>
<polygon points="273.8,262.2 290.3,258.1 300.4,263.7 283.8,267.9" fill="rgb(185,185,185)"/>
<polygon points="157.2,251.7 175.3,247.3 184.2,252.7 166.0,257.2" fill="rgb(185,185,185)"/>
<polygon points="470.5,231.2 485.0,227.6 497.1,231.6 482.6,235.3" fill="rgb(185,185,185)"/>
<polygon points="444.0,231.1 458.7,227.2 470.5,231.2 455.8,235.1" fill="rgb(185,185,185)"/>
<polygon points="247.1,260.8 263.9,256.6 273.8,262.2 256.9,266.5" fill="rgb(185,185,185)"/>
<polygon points="417.4,232.0 432.4,227.2 444.0,231.1 428.9,235.8" fill="rgb(185,185,185)"/>
<polygon points="390.8,261.7 406.0,221.1 417.4,232.0 402.1,280.7" fill="rgb(158,158,158)"/>
<polygon points="220.3,259.5 237.5,255.2 247.1,260.8 229.8,265.1" fill="rgb(185,185,185)"/>
<polygon points="364.1,271.2 379.7,255.4 390.8,261.7 375.2,277.2" fill="rgb(185,185,185)"/>
<polygon points="337.4,271.1 353.3,265.3 364.1,271.2 348.2,277.0" fill="rgb(185,185,185)"/>
<polygon points="193.2,258.3 210.9,253.9 220.3,259.5 202.5,263.9" fill="rgb(185,185,185)"/>
<polygon points="310.7,269.5 326.9,265.3 337.4,271.1 321.2,275.3" fill="rgb(185,185,185)"/>
<polygon points="283.8,267.9 300.4,263.7 310.7,269.5 294.1,273.8" fill="rgb(185,185,185)"/>
<polygon points="166.0,257.2 184.2,252.7 193.2,258.3 174.9,262.7" fill="rgb(185,185,185)"/>
<polygon points="509.4,235.6 523.7,232.0 536.2,236.0 522.0,239.8" fill="rgb(185,185,185)"/>
<polygon points="482.6,235.3 497.1,231.6 509.4,235.6 494.9,239.4" fill="rgb(185,185,185)"/>
<polygon points="455.8,235.1 470.5,231.2 482.6,235.3 467.8,239.2" fill="rgb(185,185,185)"/>
<polygon points="256.9,266.5 273.8,262.2 283.8,267.9 266.8,272.3" fill="rgb(185,185,185)"/>
<polygon points="428.9,235.8 444.0,231.1 455.8,235.1 440.7,239.6" fill="rgb(185,185,185)"/>
<polygon points="402.1,280.7 417.4,232.0 428.9,235.8 413.6,287.0" fill="rgb(158,158,158)"/>
<polygon points="229.8,265.1 247.1,260.8 256.9,266.5 239.4,270.9" fill="rgb(185,185,185)"/>
<polygon points="375.2,277.2 390.8,261.7 402.1,280.7 386.4,284.9" fill="rgb(185,185,185)"/>
<polygon points="348.2,277.0 364.1,271.2 375.2,277.2 359.2,283.0" fill="rgb(185,185,185)"/>
<polygon points="202.5,263.9 220.3,259.5 229.8,265.1 211.9,269.6" fill="rgb(185,185,185)"/>
<polygon points="321.2,275.3 337.4,271.1 348.2,277.0 331.9,281.3" fill="rgb(185,185,185)"/>
<polygon points="174.9,262.7 193.2,258.3 202.5,263.9 184.1,268.4" fill="rgb(185,185,185)"/>
<polygon points="294.1,273.8 310.7,269.5 321.2,275.3 304.5,279.7" fill="rgb(185,185,185)"/>
<polygon points="494.9,239.4 509.4,235.6 522.0,239.8 507.5,243.6" fill="rgb(185,185,185)"/>
<polygon points="266.8,272.3 283.8,267.9 294.1,273.8 276.9,278.2" fill="rgb(185,185,185)"/>
<polygon points="467.8,239.2 482.6,235.3 494.9,239.4 480.1,243.4" fill="rgb(185,185,185)"/>
<polygon points="440.7,239.6 455.8,235.1 467.8,239.2 452.7,243.5" fill="rgb(185,185,185)"/>
<polygon points="413.6,287.0 428.9,235.8 440.7,239.6 425.3,293.4" fill="rgb(158,158,158)"/>
<polygon points="239.4,270.9 256.9,266.5 266.8,272.3 249.3,276.7" fill="rgb(185,185,185)"/>
<polygon points="386.4,284.9 402.1,280.7 413.6,287.0 397.8,291.3" fill="rgb(185,185,185)"/>
<polygon points="359.2,283.0 375.2,277.2 386.4,284.9 370.3,289.2" fill="rgb(185,185,185)"/>
<polygon points="211.9,269.6 229.8,265.1 239.4,270.9 221.4,275.4" fill="rgb(185,185,185)"/>
<polygon points="331.9,281.3 348.2,277.0 359.2,283.0 342.7,287.4" fill="rgb(185,185,185)"/>
<polygon points="184.1,268.4 202.5,263.9 211.9,269.6 193.3,274.2" fill="rgb(185,185,185)"/>
<polygon points="304.5,279.7 321.2,275.3 331.9,281.3 315.0,285.7" fill="rgb(185,185,185)"/>
<polygon points="276.9,278.2 294.1,273.8 304.5,279.7 287.2,284.2" fill="rgb(185,185,185)"/>
<polygon points="480.1,243.4 494.9,239.4 507.5,243.6 492.6,247.6" fill="rgb(185,185,185)"/>
<polygon points="452.7,243.5 467.8,239.2 480.1,243.4 465.0,247.5" fill="rgb(185,185,185)"/>
<polygon points="249.3,276.7 266.8,272.3 276.9,278.2 259.3,282.7" fill="rgb(185,185,185)"/>
<polygon points="425.3,293.4 440.7,239.6 452.7,243.5 437.3,300.0" fill="rgb(158,158,158)"/>
<polygon points="397.8,291.3 413.6,287.0 425.3,293.4 409.5,297.7" fill="rgb(185,185,185)"/>
<polygon points="221.4,275.4 239.4,270.9 249.3,276.7 231.1,281.4" fill="rgb(185,185,185)"/>
<polygon points="370.3,289.2 386.4,284.9 397.8,291.3 381.7,295.6" fill="rgb(185,185,185)"/>
<polygon points="342.7,287.4 359.2,283.0 370.3,289.2 353.8,293.7" fill="rgb(185,185,185)"/>
<polygon points="193.3,274.2 211.9,269.6 221.4,275.4 202.8,280.1" fill="rgb(185,185,185)"/>
<polygon points="315.0,285.7 331.9,281.3 342.7,287.4 325.8,291.9" fill="rgb(185,185,185)"/>
<polygon points="287.2,284.2 304.5,279.7 315.0,285.7 297.7,290.3" fill="rgb(185,185,185)"/>
<polygon points="465.0,247.5 480.1,243.4 492.6,247.6 477.4,251.6" fill="rgb(185,185,185)"/>
<polygon points="259.3,282.7 276.9,278.2 287.2,284.2 269.5,288.8" fill="rgb(185,185,185)"/>
<polygon points="437.3,300.0 452.7,243.5 465.0,247.5 449.4,306.7" fill="rgb(158,158,158)"/>
<polygon points="409.5,297.7 425.3,293.4 437.3,300.0 421.4,304.3" fill="rgb(185,185,185)"/>
<polygon points="231.1,281.4 249.3,276.7 259.3,282.7 241.0,287.4" fill="rgb(185,185,185)"/>
<polygon points="381.7,295.6 397.8,291.3 409.5,297.7 393.3,302.1" fill="rgb(185,185,185)"/>
<polygon points="353.8,293.7 370.3,289.2 381.7,295.6 365.1,300.1" fill="rgb(185,185,185)"/>
<polygon points="202.8,280.1 221.4,275.4 231.1,281.4 212.4,286.1" fill="rgb(185,185,185)"/>
<polygon points="325.8,291.9 342.7,287.4 353.8,293.7 336.8,298.2" fill="rgb(185,185,185)"/>
<polygon points="297.7,290.3 315.0,285.7 325.8,291.9 308.4,296.5" fill="rgb(185,185,185)"/>
<polygon points="269.5,288.8 287.2,284.2 297.7,290.3 279.9,295.0" fill="rgb(185,185,185)"/>
<polygon points="449.4,306.7 465.0,247.5 477.4,251.6 461.9,313.5" fill="rgb(158,158,158)"/>
<polygon points="421.4,304.3 437.3,300.0 449.4,306.7 433.5,311.1" fill="rgb(185,185,185)"/>
<polygon points="241.0,287.4 259.3,282.7 269.5,288.8 251.1,293.5" fill="rgb(185,185,185)"/>
<polygon points="393.3,302.1 409.5,297.7 421.4,304.3 405.1,308.8" fill="rgb(185,185,185)"/>
<polygon points="365.1,300.1 381.7,295.6 393.3,302.1 376.6,306.7" fill="rgb(185,185,185)"/>
<polygon points="212.4,286.1 231.1,281.4 241.0,287.4 222.2,292.2" fill="rgb(185,185,185)"/>
<polygon points="336.8,298.2 353.8,293.7 365.1,300.1 348.0,304.7" fill="rgb(185,185,185)"/>
<polygon points="308.4,296.5 325.8,291.9 336.8,298.2 319.3,302.9" fill="rgb(185,185,185)"/>
<polygon points="279.9,295.0 297.7,290.3 308.4,296.5 290.5,301.3" fill="rgb(185,185,185)"/>
<polygon points="433.5,311.1 449.4,306.7 461.9,313.5 445.9,317.9" fill="rgb(185,185,185)"/>
<polygon points="251.1,293.5 269.5,288.8 279.9,295.0 261.4,299.8" fill="rgb(185,185,185)"/>
<polygon points="405.1,308.8 421.4,304.3 433.5,311.1 417.1,315.5" fill="rgb(185,185,185)"/>
<polygon points="376.6,306.7 393.3,302.1 405.1,308.8 388.4,313.3" fill="rgb(185,185,185)"/>
<polygon points="222.2,292.2 241.0,287.4 251.1,293.5 232.2,298.5" fill="rgb(185,185,185)"/>
<polygon points="348.0,304.7 365.1,300.1 376.6,306.7 359.5,311.3" fill="rgb(185,185,185)"/>
<polygon points="319.3,302.9 336.8,298.2 348.0,304.7 330.4,309.4" fill="rgb(185,185,185)"/>
<polygon points="290.5,301.3 308.4,296.5 319.3,302.9 301.3,307.7" fill="rgb(185,185,185)"/>
<polygon points="261.4,299.8 279.9,295.0 290.5,301.3 271.9,306.2" fill="rgb(185,185,185)"/>
<polygon points="417.1,315.5 433.5,311.1 445.9,317.9 429.4,322.4" fill="rgb(185,185,185)"/>
<polygon points="232.2,298.5 251.1,293.5 261.4,299.8 242.3,304.8" fill="rgb(185,185,185)"/>
<polygon points="388.4,313.3 405.1,308.8 417.1,315.5 400.3,320.2" fill="rgb(185,185,185)"/>
<polygon points="359.5,311.3 376.6,306.7 388.4,313.3 371.1,318.1" fill="rgb(185,185,185)"/>
<polygon points="330.4,309.4 348.0,304.7 359.5,311.3 341.7,316.1" fill="rgb(185,185,185)"/>
<polygon points="301.3,307.7 319.3,302.9 330.4,309.4 312.3,314.3" fill="rgb(185,185,185)"/>
<polygon points="271.9,306.2 290.5,301.3 301.3,307.7 282.6,312.7" fill="rgb(185,185,185)"/>
<polygon points="242.3,304.8 261.4,299.8 271.9,306.2 252.7,311.3" fill="rgb(185,185,185)"/>
<polygon points="400.3,320.2 417.1,315.5 429.4,322.4 412.5,327.1" fill="rgb(185,185,185)"/>
<polygon points="371.1,318.1 388.4,313.3 400.3,320.2 383.0,324.9" fill="rgb(185,185,185)"/>
<polygon points="341.7,316.1 359.5,311.3 371.1,318.1 353.3,322.9" fill="rgb(185,185,185)"/>
<polygon points="312.3,314.3 330.4,309.4 341.7,316.1 323.5,321.1" fill="rgb(185,185,185)"/>
<polygon points="282.6,312.7 301.3,307.7 312.3,314.3 293.5,319.4" fill="rgb(185,185,185)"/>
<polygon points="252.7,311.3 271.9,306.2 282.6,312.7 263.2,317.9" fill="rgb(185,185,185)"/>
<polygon points="383.0,324.9 400.3,320.2 412.5,327.1 395.0,331.9" fill="rgb(185,185,185)"/>
<polygon points="353.3,322.9 371.1,318.1 383.0,324.9 365.0,329.8" fill="rgb(185,185,185)"/>
<polygon points="323.5,321.1 341.7,316.1 353.3,322.9 334.9,327.9" fill="rgb(185,185,185)"/>
<polygon points="293.5,319.4 312.3,314.3 323.5,321.1 304.5,326.2" fill="rgb(185,185,185)"/>
<polygon points="263.2,317.9 282.6,312.7 293.5,319.4 274.0,324.6" fill="rgb(185,185,185)"/>
<polygon points="365.0,329.8 383.0,324.9 395.0,331.9 377.0,336.9" fill="rgb(185,185,185)"/>
<polygon points="334.9,327.9 353.3,322.9 365.0,329.8 346.5,334.9" fill="rgb(185,185,185)"/>
<polygon points="304.5,326.2 323.5,321.1 334.9,327.9 315.9,333.1" fill="rgb(185,185,185)"/>
<polygon points="274.0,324.6 293.5,319.4 304.5,326.2 285.0,331.5" fill="rgb(185,185,185)"/>
<polygon points="346.5,334.9 365.0,329.8 377.0,336.9 358.4,342.0" fill="rgb(185,185,185)"/>
<polygon points="315.9,333.1 334.9,327.9 346.5,334.9 327.4,340.1" fill="rgb(185,185,185)"/>
<polygon points="285.0,331.5 304.5,326.2 315.9,333.1 296.2,338.4" fill="rgb(185,185,185)"/>
<polygon points="327.4,340.1 346.5,334.9 358.4,342.0 339.2,347.3" fill="rgb(185,185,185)"/>
<polygon points="296.2,338.4 315.9,333.1 327.4,340.1 307.6,345.6" fill="rgb(185,185,185)"/>
<polygon points="307.6,345.6 327.4,340.1 339.2,347.3 319.2,352.8" fill="rgb(185,185,185)"/>
</g>
<path d="M426.6 101 l4.2 0.2 l-0.4 1.8 l-3.6 -0.3 Z" fill="#2c2c2c"/><path d="M452.4 116.2 l2.6 -2.6 l4.6 1.6 l-3.4 0.6 Z" fill="#686868"/><path d="M362.6 205.6 l2.2 -2 l5.6 1.8 l-5 1.2 Z" fill="#7a7a7a"/><path d="M408.2 226 l3.4 -3.4 l8.4 3.4 l-6.6 0.8 Z" fill="#6c6c6c"/>
<!-- Y axis below -->
<line x1="398.3" y1="331" x2="399.3" y2="428" stroke="#f5a02a" stroke-width="2"/>
<!-- green handle -->
<polyline points="391.8,8 393,60 394.5,140 395.7,194" fill="none" stroke="#1fe81f" stroke-width="2" shape-rendering="crispEdges"/>
<text x="102.3" y="119.3" font-size="11.5" fill="#2b2b2b" font-family="Liberation Sans">+X</text>
</svg>
</div>
<svg id="ui" width="769" height="288" viewBox="0 432 769 288" style="position:absolute;left:0;top:432px" font-family="Liberation Sans, sans-serif"><rect x="0" y="432" width="769" height="1" fill="#1e1e1e"/>
<rect x="0" y="433" width="769" height="4" fill="#484848"/>
<rect x="0" y="437" width="769" height="1" fill="#7d8a97"/>
<rect x="0" y="438" width="769" height="282" fill="#66727f"/>
<rect x="-19.5" y="444.5" width="240.0" height="20" rx="5" ry="5" fill="#464e58" stroke="#7a8591" stroke-width="1"/>
<rect x="167.0" y="445" width="1" height="19" fill="#7a8591"/>
<path d="M154.8 451.8 L163.2 451.8 L159 457.6 Z" fill="#fff"/>
<rect x="179.0" y="448.0" width="8" height="4.6" rx="1.2" fill="#fff" stroke="#000" stroke-width="1"/>
<rect x="179.0" y="455.2" width="8" height="4.6" rx="1.2" fill="#fff" stroke="#000" stroke-width="1"/>
<rect x="189.2" y="448.0" width="8" height="4.6" rx="1.2" fill="#fff" stroke="#000" stroke-width="1"/>
<rect x="189.2" y="455.2" width="8" height="4.6" rx="1.2" fill="#fff" stroke="#000" stroke-width="1"/>
<rect x="199.2" y="448.0" width="8" height="4.6" rx="1.2" fill="#fff" stroke="#000" stroke-width="1"/>
<rect x="199.2" y="455.2" width="8" height="4.6" rx="1.2" fill="#fff" stroke="#000" stroke-width="1"/>
<rect x="225.5" y="444.5" width="84.0" height="20" rx="5" ry="5" fill="#464e58" stroke="#7a8591" stroke-width="1"/>
<rect x="246.0" y="445" width="1" height="19" fill="#7a8591"/>
<rect x="288.0" y="445" width="1" height="19" fill="#7a8591"/>
<g fill="#fff" stroke="#000" stroke-width="0.8"><rect x="233.6" y="447.6" width="4.4" height="4"/><rect x="229.4" y="456.6" width="4.4" height="4"/><rect x="238" y="456.6" width="4.4" height="4"/></g>
<path d="M235.8 451.6 V454.4 M231.6 456.6 V454.4 H240.2 V456.6" fill="none" stroke="#fff" stroke-width="1.2"/>
<path d="M250 454.5 L256.5 448.5 L256.5 452 L263 452 L263 457 L256.5 457 L256.5 460.5 Z" fill="#fff" stroke="#000" stroke-width="1" stroke-linejoin="round"/>
<path d="M276.8 447.5 L283 454 L279.4 454 L279.4 460.8 L274.2 460.8 L274.2 454 L270.6 454 Z" fill="#fff" stroke="#000" stroke-width="1" stroke-linejoin="round"/>
<path d="M298.6 461 L304.8 454.5 L301.2 454.5 L301.2 447.8 L296 447.8 L296 454.5 L292.4 454.5 Z" fill="#717a85" stroke="#3b424b" stroke-width="1" stroke-linejoin="round"/>
<rect x="314.5" y="444.5" width="225.0" height="20" rx="5" ry="5" fill="#464e58" stroke="#7a8591" stroke-width="1"/>
<rect x="414.0" y="445" width="1" height="19" fill="#7a8591"/>
<rect x="514.0" y="445" width="1" height="19" fill="#7a8591"/>
<text x="322.0" y="457.4" font-size="10.5" fill="#d3d7dc" text-anchor="start">Add Selected</text>
<text x="422.4" y="457.4" font-size="10.5" fill="#d3d7dc" text-anchor="start">Add...</text>
<path d="M522.8 451.8 L531.4 451.8 L527.1 457.6 Z" fill="#fff"/>
<rect x="550.5" y="444.5" width="99.0" height="20" rx="5" ry="5" fill="#464e58" stroke="#7a8591" stroke-width="1"/>
<text x="557.8" y="457.4" font-size="10.5" fill="#d3d7dc" text-anchor="start">Select Backdrop</text>
<rect x="655.5" y="444.5" width="83.0" height="20" rx="5" ry="5" fill="#464e58" stroke="#7a8591" stroke-width="1"/>
<rect x="718.0" y="445" width="1" height="19" fill="#7a8591"/>
<path d="M660.5 444.5 H697.5 V464.5 H660.5 Q655.5 464.5 655.5 459.5 V449.5 Q655.5 444.5 660.5 444.5 Z" fill="#d2993e" stroke="#23262b" stroke-width="1"/>
<rect x="675.5" y="445" width="1" height="19" fill="#8a6428"/>
<path d="M665 448.6 L670.4 454 L665 459.4 L659.6 454 Z" fill="#f4a7c6" stroke="#7a4d3a" stroke-width="0.7"/>
<circle cx="685.8" cy="454" r="5" fill="#f3e4ca" stroke="#7a5a30" stroke-width="0.7"/>
<path d="M703.0 447.0 l3.4 3.4 l-3.4 3.4 l-3.4 -3.4 Z" fill="#a691b6"/>
<path d="M703.0 454.2 l3.4 3.4 l-3.4 3.4 l-3.4 -3.4 Z" fill="#a691b6"/>
<path d="M711.0 447.0 l3.4 3.4 l-3.4 3.4 l-3.4 -3.4 Z" fill="#a691b6"/>
<path d="M711.0 454.2 l3.4 3.4 l-3.4 3.4 l-3.4 -3.4 Z" fill="#a691b6"/>
<g stroke-width="1.3"><path d="M724 449.6 H734" stroke="#2e3238"/><path d="M724 454.2 H734" stroke="#cfd2d6"/><path d="M724 458.8 H734" stroke="#2e3238"/></g>
<circle cx="724.2" cy="449.6" r="1.3" fill="#2e3238"/><circle cx="724.2" cy="454.2" r="1.3" fill="#cfd2d6"/><circle cx="724.2" cy="458.8" r="1.3" fill="#2e3238"/>
<rect x="238.8" y="505.6" width="179.5" height="20.8" rx="6" ry="6" fill="#3e4553" stroke="#8893a0" stroke-width="1.5"/>
<path d="M249.6 512.6 h8.2 l-4.1 8.6 Z" fill="#c9cdd3"/>
<g transform="translate(280.5 516.5)">
<rect x="-1.6" y="-6.1" width="3.2" height="3.2" fill="#c9b832" stroke="#1d2026" stroke-width="0.5" transform="rotate(0)"/>
<rect x="-1.6" y="-6.1" width="3.2" height="3.2" fill="#c9b832" stroke="#1d2026" stroke-width="0.5" transform="rotate(45)"/>
<rect x="-1.6" y="-6.1" width="3.2" height="3.2" fill="#c9b832" stroke="#1d2026" stroke-width="0.5" transform="rotate(90)"/>
<rect x="-1.6" y="-6.1" width="3.2" height="3.2" fill="#c9b832" stroke="#1d2026" stroke-width="0.5" transform="rotate(135)"/>
<rect x="-1.6" y="-6.1" width="3.2" height="3.2" fill="#c9b832" stroke="#1d2026" stroke-width="0.5" transform="rotate(180)"/>
<rect x="-1.6" y="-6.1" width="3.2" height="3.2" fill="#c9b832" stroke="#1d2026" stroke-width="0.5" transform="rotate(225)"/>
<rect x="-1.6" y="-6.1" width="3.2" height="3.2" fill="#c9b832" stroke="#1d2026" stroke-width="0.5" transform="rotate(270)"/>
<rect x="-1.6" y="-6.1" width="3.2" height="3.2" fill="#c9b832" stroke="#1d2026" stroke-width="0.5" transform="rotate(315)"/>
<circle r="4.5" fill="#c9b832" stroke="#1d2026" stroke-width="0.6"/><circle r="2.1" fill="#2a3040" stroke="#1d2026" stroke-width="0.6"/></g>
<text x="289.9" y="521.4" font-size="10.5" fill="#20242c" text-anchor="start" opacity="0.55">Select By Index</text>
<text x="289.3" y="520.8" font-size="10.5" fill="#d3d7dc" text-anchor="start">Select By Index</text>
<rect x="79.0" y="546.0" width="180.0" height="19.0" rx="6" ry="6" fill="#3e4553" stroke="#eaa136" stroke-width="2"/>
<path d="M89.6 551.6 h8.2 l-4.1 8.6 Z" fill="#c9cdd3"/>
<g transform="translate(120.5 555.5)" stroke="#22252b" stroke-width="0.7" stroke-linejoin="round">
<path d="M0 -6.2 L5.6 -3.6 L0 -1 L-5.6 -3.6 Z" fill="#e0a83a"/>
<path d="M-5.6 -3.6 L0 -1 L0 6.4 L-5.6 3.2 Z" fill="#b07a1c"/>
<path d="M5.6 -3.6 L0 -1 L0 6.4 L5.6 3.2 Z" fill="#8a5c12"/>
</g>
<text x="129.9" y="560.4" font-size="10.5" fill="#20242c" text-anchor="start" opacity="0.55">Plane</text>
<text x="129.3" y="559.8" font-size="10.5" fill="#f1a534" text-anchor="start">Plane</text>
<rect x="18.8" y="645.1" width="179.5" height="20.8" rx="6" ry="6" fill="#3e4553" stroke="#8893a0" stroke-width="1.5"/>
<path d="M29.6 652.1 h8.2 l-4.1 8.6 Z" fill="#c9cdd3"/>
<g transform="translate(60.5 656.0)" stroke="#22252b" stroke-width="0.7" stroke-linejoin="round">
<path d="M0 -6.2 L5.6 -3.6 L0 -1 L-5.6 -3.6 Z" fill="#b9c9d8"/>
<path d="M-5.6 -3.6 L0 -1 L0 6.4 L-5.6 3.2 Z" fill="#7f95aa"/>
<path d="M5.6 -3.6 L0 -1 L0 6.4 L5.6 3.2 Z" fill="#5e7388"/>
</g>
<text x="69.9" y="660.9" font-size="10.5" fill="#20242c" text-anchor="start" opacity="0.55">Curve</text>
<text x="69.3" y="660.3" font-size="10.5" fill="#d3d7dc" text-anchor="start">Curve</text>
<rect x="458.8" y="545.6" width="179.5" height="80.8" rx="6" ry="6" fill="#3e4553" stroke="#8893a0" stroke-width="1.5"/>
<rect x="459.0" y="565.0" width="179.0" height="1" fill="#6b7481"/>
<rect x="459.0" y="586.0" width="179.0" height="1" fill="#5a6270"/>
<rect x="459.0" y="606.0" width="179.0" height="1" fill="#5a6270"/>
<path d="M469.6 552.0 h8.2 l-4.1 8.6 Z" fill="#c9cdd3"/>
<g transform="translate(500.5 555.9)">
<rect x="-1.6" y="-6.1" width="3.2" height="3.2" fill="#8297ab" stroke="#1d2026" stroke-width="0.5" transform="rotate(0)"/>
<rect x="-1.6" y="-6.1" width="3.2" height="3.2" fill="#8297ab" stroke="#1d2026" stroke-width="0.5" transform="rotate(45)"/>
<rect x="-1.6" y="-6.1" width="3.2" height="3.2" fill="#8297ab" stroke="#1d2026" stroke-width="0.5" transform="rotate(90)"/>
<rect x="-1.6" y="-6.1" width="3.2" height="3.2" fill="#8297ab" stroke="#1d2026" stroke-width="0.5" transform="rotate(135)"/>
<rect x="-1.6" y="-6.1" width="3.2" height="3.2" fill="#8297ab" stroke="#1d2026" stroke-width="0.5" transform="rotate(180)"/>
<rect x="-1.6" y="-6.1" width="3.2" height="3.2" fill="#8297ab" stroke="#1d2026" stroke-width="0.5" transform="rotate(225)"/>
<rect x="-1.6" y="-6.1" width="3.2" height="3.2" fill="#8297ab" stroke="#1d2026" stroke-width="0.5" transform="rotate(270)"/>
<rect x="-1.6" y="-6.1" width="3.2" height="3.2" fill="#8297ab" stroke="#1d2026" stroke-width="0.5" transform="rotate(315)"/>
<circle r="4.5" fill="#8297ab" stroke="#1d2026" stroke-width="0.6"/><circle r="2.1" fill="#2a3040" stroke="#1d2026" stroke-width="0.6"/></g>
<text x="509.9" y="560.8" font-size="10.5" fill="#20242c" text-anchor="start" opacity="0.55">Push</text>
<text x="509.3" y="560.2" font-size="10.5" fill="#d3d7dc" text-anchor="start">Push</text>
<text x="552.6" y="581.0" font-size="10.5" fill="#20242c" text-anchor="middle" opacity="0.55">Tool Pipe</text>
<text x="552.0" y="580.4" font-size="10.5" fill="#d3d7dc" text-anchor="middle">Tool Pipe</text>
<path d="M470.0 591.9 v8 l9 -4 Z" fill="#c3c7cd"/>
<text x="552.6" y="601.0" font-size="10.5" fill="#20242c" text-anchor="middle" opacity="0.55">Selection</text>
<text x="552.0" y="600.4" font-size="10.5" fill="#d3d7dc" text-anchor="middle">Selection</text>
<path d="M470.0 611.9 v8 l9 -4 Z" fill="#c3c7cd"/>
<text x="552.6" y="621.0" font-size="10.5" fill="#20242c" text-anchor="middle" opacity="0.55">Geometry</text>
<text x="552.0" y="620.4" font-size="10.5" fill="#d3d7dc" text-anchor="middle">Geometry</text>
<rect x="239.0" y="626.0" width="179.0" height="79.0" rx="6" ry="6" fill="#3e4553" stroke="#eaa136" stroke-width="2"/>
<rect x="239.0" y="644.5" width="179.0" height="1.8" fill="#d99a3c"/>
<rect x="239.0" y="665.5" width="179.0" height="1" fill="#866c45"/>
<rect x="239.0" y="685.5" width="179.0" height="1" fill="#866c45"/>
<path d="M249.6 631.6 h8.2 l-4.1 8.6 Z" fill="#c9cdd3"/>
<g transform="translate(280.5 635.5)" stroke-linecap="round">
<path d="M0 1.5 V-6" stroke="#2a9a2a" stroke-width="1.8"/>
<path d="M0 1.5 L-5.5 5" stroke="#3d2d1c" stroke-width="1.8"/>
<path d="M0 1.5 L5.8 4.6" stroke="#c42a22" stroke-width="1.8"/>
</g>
<text x="289.9" y="640.4" font-size="10.5" fill="#20242c" text-anchor="start" opacity="0.55">Curve Falloff</text>
<text x="289.3" y="639.8" font-size="10.5" fill="#f1a534" text-anchor="start">Curve Falloff</text>
<text x="332.6" y="660.6" font-size="10.5" fill="#20242c" text-anchor="middle" opacity="0.55">Deform Meshes</text>
<text x="332.0" y="660.0" font-size="10.5" fill="#d3d7dc" text-anchor="middle">Deform Meshes</text>
<path d="M250.0 671.5 v8 l9 -4 Z" fill="#c3c7cd"/>
<text x="332.6" y="680.6" font-size="10.5" fill="#20242c" text-anchor="middle" opacity="0.55">Textures</text>
<text x="332.0" y="680.0" font-size="10.5" fill="#d3d7dc" text-anchor="middle">Textures</text>
<path d="M250.0 691.5 v8 l9 -4 Z" fill="#c3c7cd"/>
<text x="332.6" y="700.6" font-size="10.5" fill="#20242c" text-anchor="middle" opacity="0.55">Curves</text>
<text x="332.0" y="700.0" font-size="10.5" fill="#d3d7dc" text-anchor="middle">Curves</text>
<path d="M418.5 516.5 C438.5 516.5 438.5 596.5 458.5 596.5" fill="none" stroke="#c4a0ee" stroke-width="1.5"/>
<path d="M259.5 556.0 C339.1 556.0 378.9 616.5 458.5 616.5" fill="none" stroke="#c4a0ee" stroke-width="1.5"/>
<path d="M418.5 636.0 C438.5 636.0 438.5 576.5 458.5 576.5" fill="none" stroke="#c4a0ee" stroke-width="1.5"/>
<path d="M198.5 656.0 C218.5 656.0 218.5 696.5 238.5 696.5" fill="none" stroke="#c4a0ee" stroke-width="1.5"/>
<path d="M418.5 511.3 l5.2 5.2 l-5.2 5.2 l-5.2 -5.2 Z" fill="#d7a6fc" stroke="#15151a" stroke-width="1"/>
<path d="M259.5 550.8 l5.2 5.2 l-5.2 5.2 l-5.2 -5.2 Z" fill="#d7a6fc" stroke="#15151a" stroke-width="1"/>
<path d="M198.5 650.8 l5.2 5.2 l-5.2 5.2 l-5.2 -5.2 Z" fill="#d7a6fc" stroke="#15151a" stroke-width="1"/>
<path d="M418.5 630.8 l5.2 5.2 l-5.2 5.2 l-5.2 -5.2 Z" fill="#d7a6fc" stroke="#15151a" stroke-width="1"/>
<path d="M638.5 550.8 l5.2 5.2 l-5.2 5.2 l-5.2 -5.2 Z" fill="#8880a6" stroke="#15151a" stroke-width="1"/>
<path d="M458.5 571.3 l5.2 5.2 l-5.2 5.2 l-5.2 -5.2 Z" fill="#d7a6fc" stroke="#15151a" stroke-width="1"/>
<path d="M458.5 591.3 l5.2 5.2 l-5.2 5.2 l-5.2 -5.2 Z" fill="#d7a6fc" stroke="#15151a" stroke-width="1"/>
<path d="M458.5 611.3 l5.2 5.2 l-5.2 5.2 l-5.2 -5.2 Z" fill="#d7a6fc" stroke="#15151a" stroke-width="1"/>
<path d="M238.5 651.3 l5.2 5.2 l-5.2 5.2 l-5.2 -5.2 Z" fill="#8880a6" stroke="#15151a" stroke-width="1"/>
<path d="M238.5 671.3 l5.2 5.2 l-5.2 5.2 l-5.2 -5.2 Z" fill="#8880a6" stroke="#15151a" stroke-width="1"/>
<path d="M238.5 691.3 l5.2 5.2 l-5.2 5.2 l-5.2 -5.2 Z" fill="#d7a6fc" stroke="#15151a" stroke-width="1"/></svg>
</body></html>
